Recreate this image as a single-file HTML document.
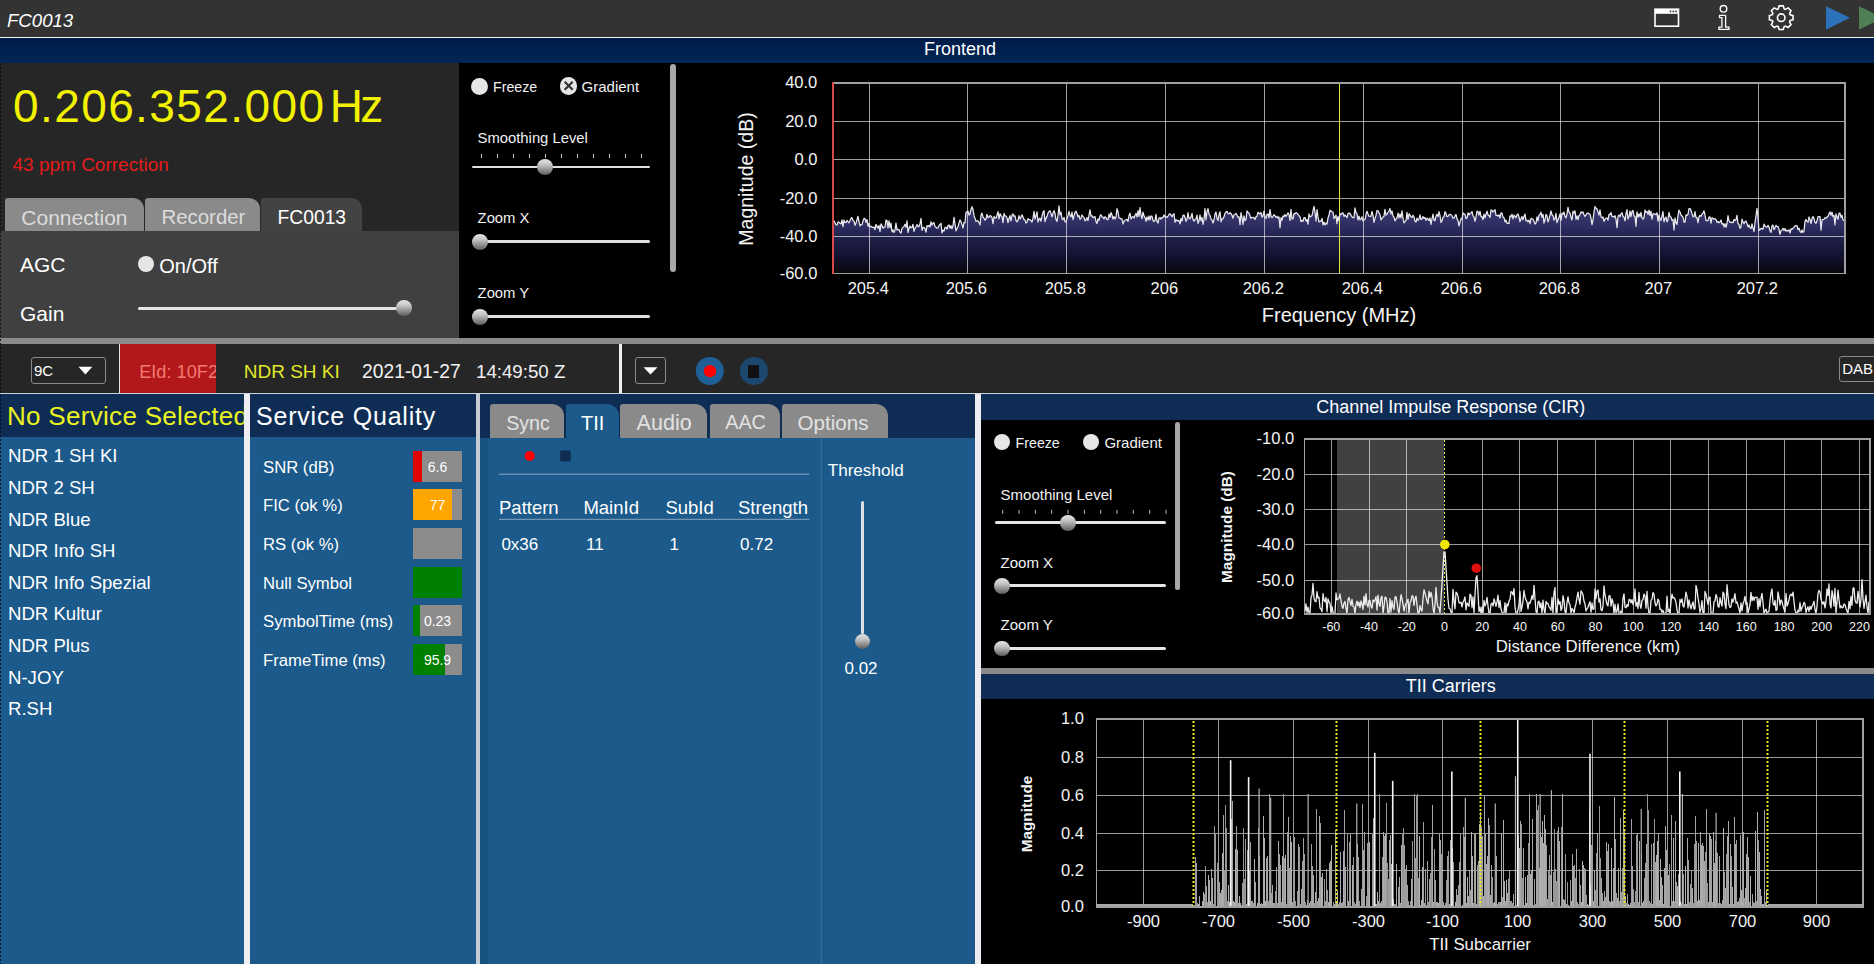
<!DOCTYPE html><html><head><meta charset="utf-8"><style>
*{margin:0;padding:0;box-sizing:border-box}
html,body{width:1874px;height:964px;overflow:hidden;background:#000;font-family:"Liberation Sans",sans-serif}
.a{position:absolute}
.t{position:absolute;white-space:nowrap;font-family:"Liberation Sans",sans-serif}
.thumb{position:absolute;border-radius:50%;background:linear-gradient(180deg,#e4e4e4 0%,#c4c4c4 35%,#8c8c8c 70%,#5c5c5c 100%)}
.radio{position:absolute;border-radius:50%;background:#e6e6e6}
svg{position:absolute;left:0;top:0}
</style></head><body><div class="a" style="left:0px;top:0px;width:1874px;height:37px;background:#333333;"></div>
<div class="t " style="left:7.0px;top:11.5px;font-size:18.6px;line-height:18.6px;color:#fff;font-style:italic">FC0013</div>
<svg width="1874" height="36" style="left:0;top:0">
<rect x="1655" y="9.2" width="23.5" height="17" fill="none" stroke="#fff" stroke-width="1.6"/>
<rect x="1655" y="9.2" width="23.5" height="4.6" fill="#fff"/>
<circle cx="1670.5" cy="11.4" r="0.9" fill="#333"/><circle cx="1673.3" cy="11.4" r="0.9" fill="#333"/><circle cx="1676" cy="11.4" r="0.9" fill="#333"/>
<circle cx="1723.5" cy="8.8" r="3.3" fill="none" stroke="#fff" stroke-width="1.4"/>
<path d="M1719.5 15.3 H1725.6 V27.1 H1729 V29.4 H1718.9 V27.1 H1721.9 V17.6 H1719.5 Z" fill="none" stroke="#fff" stroke-width="1.3" stroke-linejoin="round"/>
<path id="gear" d="M1790.00 14.69 L1793.03 15.67 L1793.03 19.73 L1790.00 20.71 L1789.55 21.79 L1791.00 24.63 L1788.13 27.50 L1785.29 26.05 L1784.21 26.50 L1783.23 29.53 L1779.17 29.53 L1778.19 26.50 L1777.11 26.05 L1774.27 27.50 L1771.40 24.63 L1772.85 21.79 L1772.40 20.71 L1769.37 19.73 L1769.37 15.67 L1772.40 14.69 L1772.85 13.61 L1771.40 10.77 L1774.27 7.90 L1777.11 9.35 L1778.19 8.90 L1779.17 5.87 L1783.23 5.87 L1784.21 8.90 L1785.29 9.35 L1788.13 7.90 L1791.00 10.77 L1789.55 13.61 Z" fill="none" stroke="#fff" stroke-width="1.6"/>
<circle cx="1781.2" cy="17.7" r="3.8" fill="none" stroke="#fff" stroke-width="1.6"/>
<path d="M1826 6.3 L1850 17.7 L1826 29.8 Z" fill="#2b72bb"/>
<path d="M1859 6.3 L1883 17.7 L1859 29.8 Z" fill="#4f7f55"/>
</svg>
<div class="a" style="left:0px;top:37.5px;width:1874px;height:25.5px;background:linear-gradient(180deg,#001c48 0%,#00214f 50%,#002656 100%);"></div>
<div class="a" style="left:0px;top:36.8px;width:1874px;height:1.4px;background:#f4f4f4;"></div>
<div class="t " style="left:460.0px;width:1000px;text-align:center;top:40.4px;font-size:18px;line-height:18px;color:#fff;">Frontend</div>
<div class="a" style="left:0px;top:63px;width:459px;height:168px;background:#262626;"></div>
<div class="t " style="left:13.0px;top:83.3px;font-size:46px;line-height:46px;color:#f2f200;letter-spacing:1.4px">0.206.352.000</div>
<div class="t " style="left:329.7px;top:83.3px;font-size:46px;line-height:46px;color:#f2f200;letter-spacing:-2.6px">Hz</div>
<div class="t " style="left:12.5px;top:154.9px;font-size:19px;line-height:19px;color:#e31c1c;">43 ppm Correction</div>
<div class="a" style="left:0px;top:231px;width:459px;height:107px;background:#404040;"></div>
<div class="a" style="left:5px;top:197.5px;width:139px;height:33.5px;background:#8a8a8a;border-radius:3px 11px 0 0"></div>
<div class="t " style="left:21.3px;top:206.5px;font-size:21px;line-height:21px;color:#dcdcdc;">Connection</div>
<div class="a" style="left:145px;top:197.5px;width:114.60000000000002px;height:33.5px;background:#8a8a8a;border-radius:3px 11px 0 0"></div>
<div class="t " style="left:161.5px;top:207.0px;font-size:20.4px;line-height:20.4px;color:#dcdcdc;">Recorder</div>
<div class="a" style="left:260.8px;top:197.5px;width:101.59999999999997px;height:33.5px;background:#434343;border-radius:3px 11px 0 0"></div>
<div class="t " style="left:277.5px;top:208.0px;font-size:19.3px;line-height:19.3px;color:#ffffff;">FC0013</div>
<div class="t " style="left:20.0px;top:253.6px;font-size:21px;line-height:21px;color:#fff;">AGC</div>
<div class="radio" style="left:138px;top:255.5px;width:16px;height:16px"></div>
<div class="t " style="left:159.3px;top:255.8px;font-size:20px;line-height:20px;color:#fff;">On/Off</div>
<div class="t " style="left:20.0px;top:302.5px;font-size:21px;line-height:21px;color:#fff;">Gain</div>
<div class="a" style="left:138px;top:306.5px;width:262px;height:3px;background:#e6e6e6;border-radius:1.5px"></div>
<div class="thumb" style="left:395.90000000000003px;top:300.1px;width:15.8px;height:15.8px"></div>
<div class="a" style="left:459px;top:63px;width:1415px;height:275px;background:#000;"></div>
<div class="radio" style="left:470.9px;top:77.7px;width:17.0px;height:17.0px"></div>
<div class="t " style="left:493.0px;top:80.0px;font-size:14.2px;line-height:14.2px;color:#f2f2f2;">Freeze</div>
<div class="radio" style="left:559.8px;top:77.39999999999999px;width:17.4px;height:17.4px"></div>
<svg class="a" style="left:559.8px;top:77.39999999999999px" width="17.4" height="17.4"><path d="M4.699999999999999 4.699999999999999L12.7 12.7M12.7 4.699999999999999L4.699999999999999 12.7" stroke="#333" stroke-width="2.2"/></svg>
<div class="t " style="left:581.6px;top:79.3px;font-size:15px;line-height:15px;color:#f2f2f2;">Gradient</div>
<div class="t " style="left:477.6px;top:130.9px;font-size:14.8px;line-height:14.8px;color:#f2f2f2;">Smoothing Level</div>
<svg width="1874" height="340"><rect x="481" y="154" width="1" height="4" fill="#c8c8c8"/><rect x="497" y="154" width="1" height="4" fill="#c8c8c8"/><rect x="513" y="154" width="1" height="4" fill="#c8c8c8"/><rect x="529" y="154" width="1" height="4" fill="#c8c8c8"/><rect x="545" y="154" width="1" height="4" fill="#c8c8c8"/><rect x="561" y="154" width="1" height="4" fill="#c8c8c8"/><rect x="577" y="154" width="1" height="4" fill="#c8c8c8"/><rect x="593" y="154" width="1" height="4" fill="#c8c8c8"/><rect x="609" y="154" width="1" height="4" fill="#c8c8c8"/><rect x="625" y="154" width="1" height="4" fill="#c8c8c8"/><rect x="641" y="154" width="1" height="4" fill="#c8c8c8"/></svg>
<div class="a" style="left:472px;top:165.5px;width:178px;height:2.5px;background:#e0e0e0;border-radius:1.5px"></div>
<div class="thumb" style="left:537.4px;top:159.39999999999998px;width:15.8px;height:15.8px"></div>
<div class="t " style="left:477.6px;top:210.7px;font-size:14.8px;line-height:14.8px;color:#f2f2f2;">Zoom X</div>
<div class="a" style="left:472px;top:240.3px;width:178px;height:2.5px;background:#e0e0e0;border-radius:1.5px"></div>
<div class="thumb" style="left:472.1px;top:234.29999999999998px;width:15.8px;height:15.8px"></div>
<div class="t " style="left:477.6px;top:285.7px;font-size:14.8px;line-height:14.8px;color:#f2f2f2;">Zoom Y</div>
<div class="a" style="left:472px;top:315px;width:178px;height:2.5px;background:#e0e0e0;border-radius:1.5px"></div>
<div class="thumb" style="left:472.1px;top:309.0px;width:15.8px;height:15.8px"></div>
<div class="a" style="left:670px;top:64px;width:6px;height:208px;background:#a8a8a8;border-radius:3px"></div>
<svg width="1874" height="340">
<defs><linearGradient id="sg" x1="0" y1="205" x2="0" y2="273.5" gradientUnits="userSpaceOnUse">
<stop offset="0" stop-color="#3c3c74"/><stop offset="0.3" stop-color="#2e2e62"/><stop offset="0.5" stop-color="#1f1f48"/><stop offset="0.75" stop-color="#121230"/><stop offset="1" stop-color="#06060c"/></linearGradient></defs>
<polygon points="833,273.5 834,220.7 835,222.7 836,224.8 837,225.0 838,221.9 839,222.3 840,223.4 841,223.8 842,219.9 843,226.7 844,220.1 845,222.5 846,222.7 847,220.3 848,221.6 849,222.8 850,220.7 851,218.3 852,217.6 853,220.5 854,221.2 855,225.3 856,222.9 857,219.7 858,216.3 859,221.6 860,225.9 861,224.6 862,224.7 863,221.1 864,218.4 865,218.5 866,222.3 867,219.6 868,226.2 869,223.4 870,227.0 871,226.2 872,227.1 873,227.5 874,227.0 875,229.7 876,224.3 877,226.7 878,228.2 879,225.4 880,231.7 881,223.8 882,225.5 883,228.2 884,227.3 885,227.1 886,220.0 887,220.6 888,228.0 889,220.8 890,227.7 891,223.2 892,231.8 893,229.9 894,232.5 895,230.2 896,223.1 897,230.0 898,229.4 899,229.7 900,232.1 901,233.1 902,228.2 903,227.4 904,226.4 905,224.3 906,227.3 907,220.9 908,232.5 909,228.4 910,226.1 911,227.7 912,227.5 913,224.3 914,231.4 915,228.1 916,227.1 917,224.6 918,226.4 919,226.6 920,223.9 921,218.3 922,230.3 923,227.6 924,227.3 925,228.8 926,232.2 927,225.7 928,226.5 929,225.3 930,227.0 931,221.8 932,225.0 933,223.2 934,222.6 935,226.6 936,227.3 937,228.2 938,227.9 939,225.5 940,224.5 941,223.3 942,233.0 943,230.1 944,231.1 945,227.3 946,227.4 947,229.1 948,225.7 949,224.9 950,228.2 951,225.7 952,228.7 953,225.7 954,217.4 955,224.0 956,230.8 957,228.5 958,226.8 959,222.9 960,219.9 961,221.7 962,224.4 963,228.0 964,222.5 965,222.8 966,212.1 967,212.2 968,211.0 969,215.1 970,214.0 971,209.5 972,206.7 973,209.5 974,215.7 975,218.4 976,221.3 977,220.7 978,221.1 979,222.5 980,225.0 981,215.1 982,213.1 983,217.0 984,218.4 985,220.1 986,219.0 987,214.3 988,217.6 989,217.2 990,215.7 991,216.1 992,217.7 993,223.7 994,216.4 995,218.0 996,218.2 997,215.1 998,211.7 999,218.8 1000,213.6 1001,215.7 1002,216.5 1003,222.6 1004,213.4 1005,215.9 1006,216.0 1007,217.9 1008,222.5 1009,218.5 1010,215.7 1011,220.9 1012,215.4 1013,213.8 1014,216.4 1015,215.9 1016,220.6 1017,221.8 1018,220.4 1019,215.7 1020,218.9 1021,217.3 1022,214.8 1023,217.1 1024,219.6 1025,220.0 1026,223.0 1027,222.4 1028,218.7 1029,219.7 1030,219.7 1031,220.7 1032,222.1 1033,218.4 1034,211.4 1035,219.0 1036,215.6 1037,211.8 1038,222.0 1039,219.2 1040,218.1 1041,221.2 1042,216.0 1043,212.3 1044,210.6 1045,221.6 1046,218.2 1047,216.6 1048,213.1 1049,211.5 1050,210.7 1051,213.4 1052,216.9 1053,213.2 1054,210.6 1055,213.5 1056,219.6 1057,221.4 1058,215.5 1059,205.8 1060,214.8 1061,212.2 1062,219.0 1063,219.6 1064,217.4 1065,221.7 1066,222.3 1067,218.6 1068,215.4 1069,211.3 1070,215.7 1071,216.9 1072,212.1 1073,219.7 1074,215.8 1075,212.1 1076,211.2 1077,213.8 1078,216.8 1079,215.4 1080,219.3 1081,218.1 1082,215.0 1083,216.6 1084,217.5 1085,220.8 1086,220.0 1087,217.6 1088,220.5 1089,215.3 1090,209.8 1091,216.0 1092,215.7 1093,217.7 1094,217.1 1095,216.6 1096,221.6 1097,223.5 1098,218.9 1099,220.4 1100,215.8 1101,214.7 1102,217.0 1103,217.1 1104,218.9 1105,216.7 1106,217.6 1107,219.7 1108,219.6 1109,214.0 1110,217.5 1111,212.5 1112,214.8 1113,219.0 1114,216.6 1115,219.0 1116,217.0 1117,208.6 1118,211.7 1119,218.0 1120,218.2 1121,219.0 1122,218.9 1123,224.0 1124,221.1 1125,220.1 1126,220.0 1127,219.3 1128,221.5 1129,215.5 1130,213.2 1131,218.9 1132,217.2 1133,216.5 1134,217.9 1135,215.5 1136,213.4 1137,217.0 1138,210.6 1139,216.4 1140,207.5 1141,215.4 1142,218.7 1143,212.2 1144,215.9 1145,217.3 1146,221.4 1147,217.0 1148,220.0 1149,216.0 1150,220.0 1151,216.0 1152,216.2 1153,220.6 1154,221.7 1155,220.4 1156,214.4 1157,221.6 1158,223.0 1159,218.3 1160,217.5 1161,219.2 1162,217.5 1163,217.5 1164,214.9 1165,216.9 1166,216.8 1167,217.4 1168,216.1 1169,214.5 1170,213.6 1171,215.1 1172,216.8 1173,214.7 1174,213.6 1175,222.3 1176,219.6 1177,221.0 1178,220.3 1179,220.6 1180,223.9 1181,218.4 1182,221.0 1183,215.3 1184,215.0 1185,217.5 1186,221.3 1187,219.5 1188,212.6 1189,218.3 1190,218.8 1191,217.1 1192,213.3 1193,219.4 1194,221.1 1195,219.6 1196,218.9 1197,215.2 1198,223.3 1199,221.0 1200,214.9 1201,220.7 1202,217.4 1203,224.4 1204,219.5 1205,208.5 1206,219.6 1207,211.6 1208,208.7 1209,214.2 1210,215.4 1211,219.2 1212,219.9 1213,223.0 1214,220.0 1215,214.0 1216,212.0 1217,218.5 1218,220.6 1219,214.7 1220,211.8 1221,221.9 1222,218.8 1223,218.8 1224,216.7 1225,213.4 1226,211.9 1227,211.3 1228,213.4 1229,213.8 1230,212.6 1231,213.6 1232,215.2 1233,218.2 1234,214.9 1235,214.5 1236,213.4 1237,215.0 1238,217.2 1239,216.7 1240,224.7 1241,212.6 1242,217.7 1243,224.5 1244,215.9 1245,220.6 1246,219.6 1247,210.8 1248,212.4 1249,213.2 1250,215.7 1251,218.3 1252,217.5 1253,217.4 1254,217.9 1255,219.5 1256,216.8 1257,216.3 1258,212.3 1259,213.3 1260,214.0 1261,212.5 1262,217.2 1263,216.1 1264,211.1 1265,217.1 1266,218.3 1267,214.4 1268,214.0 1269,217.9 1270,209.7 1271,216.4 1272,217.6 1273,216.3 1274,214.7 1275,215.7 1276,217.4 1277,216.3 1278,218.3 1279,216.9 1280,227.7 1281,217.6 1282,220.4 1283,215.9 1284,216.7 1285,214.5 1286,216.5 1287,214.8 1288,212.8 1289,214.5 1290,220.4 1291,209.3 1292,218.8 1293,218.9 1294,213.6 1295,213.9 1296,212.6 1297,213.2 1298,214.4 1299,215.8 1300,216.7 1301,221.6 1302,220.3 1303,221.3 1304,217.5 1305,217.5 1306,221.1 1307,219.6 1308,224.1 1309,213.9 1310,216.9 1311,216.2 1312,215.7 1313,210.7 1314,206.4 1315,212.3 1316,221.0 1317,209.7 1318,216.9 1319,222.0 1320,221.2 1321,221.4 1322,218.4 1323,224.8 1324,222.2 1325,225.0 1326,222.9 1327,224.0 1328,218.0 1329,215.0 1330,210.4 1331,210.8 1332,211.9 1333,212.2 1334,218.5 1335,217.2 1336,215.1 1337,223.6 1338,216.4 1339,220.7 1340,213.9 1341,214.5 1342,213.2 1343,212.9 1344,216.3 1345,215.0 1346,216.3 1347,217.5 1348,213.5 1349,213.1 1350,213.4 1351,215.4 1352,216.8 1353,217.7 1354,217.7 1355,207.8 1356,212.8 1357,213.8 1358,219.8 1359,216.1 1360,219.9 1361,219.0 1362,216.7 1363,221.1 1364,219.8 1365,219.5 1366,214.4 1367,211.3 1368,213.9 1369,216.2 1370,216.3 1371,216.1 1372,211.5 1373,215.3 1374,222.4 1375,218.4 1376,215.4 1377,210.5 1378,210.8 1379,212.9 1380,214.5 1381,219.9 1382,218.4 1383,217.0 1384,216.4 1385,209.3 1386,215.2 1387,214.1 1388,212.3 1389,211.2 1390,208.5 1391,214.0 1392,210.9 1393,215.8 1394,217.2 1395,220.9 1396,218.9 1397,218.1 1398,213.1 1399,217.8 1400,214.0 1401,217.9 1402,210.8 1403,218.1 1404,222.8 1405,221.7 1406,220.5 1407,212.3 1408,219.5 1409,213.9 1410,215.0 1411,217.2 1412,217.5 1413,215.2 1414,216.9 1415,221.3 1416,222.1 1417,218.2 1418,220.3 1419,218.8 1420,214.9 1421,219.6 1422,218.7 1423,216.5 1424,218.5 1425,217.4 1426,220.4 1427,218.4 1428,218.7 1429,220.7 1430,217.9 1431,224.3 1432,218.9 1433,214.2 1434,220.1 1435,220.7 1436,216.4 1437,214.4 1438,216.6 1439,211.7 1440,215.6 1441,222.5 1442,220.8 1443,217.0 1444,216.9 1445,211.6 1446,213.5 1447,216.7 1448,216.5 1449,214.7 1450,214.3 1451,214.8 1452,215.9 1453,218.2 1454,218.2 1455,215.8 1456,214.5 1457,218.8 1458,220.6 1459,225.9 1460,222.1 1461,218.7 1462,218.8 1463,212.9 1464,213.9 1465,214.3 1466,218.5 1467,218.0 1468,212.9 1469,214.9 1470,213.3 1471,213.2 1472,211.5 1473,215.9 1474,216.9 1475,221.4 1476,216.9 1477,211.1 1478,211.6 1479,215.0 1480,211.3 1481,216.7 1482,216.6 1483,219.7 1484,214.1 1485,217.9 1486,214.2 1487,211.2 1488,214.9 1489,215.7 1490,217.5 1491,210.0 1492,210.2 1493,212.0 1494,210.9 1495,209.6 1496,215.4 1497,215.3 1498,216.1 1499,214.8 1500,218.0 1501,212.9 1502,213.1 1503,217.2 1504,217.6 1505,221.9 1506,220.0 1507,223.4 1508,223.2 1509,223.3 1510,215.8 1511,216.9 1512,214.1 1513,218.8 1514,215.1 1515,216.4 1516,217.9 1517,214.7 1518,214.0 1519,217.0 1520,221.5 1521,218.8 1522,216.5 1523,219.7 1524,216.4 1525,214.1 1526,220.7 1527,220.4 1528,221.8 1529,220.2 1530,223.7 1531,218.4 1532,218.7 1533,219.2 1534,221.5 1535,224.0 1536,223.1 1537,216.9 1538,220.8 1539,215.2 1540,214.6 1541,212.2 1542,217.4 1543,214.3 1544,223.1 1545,219.8 1546,214.4 1547,215.8 1548,221.9 1549,219.2 1550,214.8 1551,210.8 1552,215.1 1553,215.6 1554,220.1 1555,218.9 1556,213.5 1557,222.6 1558,219.9 1559,217.5 1560,213.8 1561,220.4 1562,213.2 1563,214.2 1564,212.1 1565,216.3 1566,217.8 1567,214.4 1568,207.4 1569,212.1 1570,213.2 1571,217.3 1572,220.0 1573,211.2 1574,213.2 1575,210.8 1576,219.3 1577,215.8 1578,219.7 1579,215.7 1580,214.8 1581,211.9 1582,212.8 1583,212.0 1584,214.8 1585,216.5 1586,214.9 1587,213.4 1588,213.0 1589,214.0 1590,214.1 1591,218.3 1592,224.6 1593,219.8 1594,212.0 1595,206.5 1596,208.3 1597,208.9 1598,211.9 1599,215.2 1600,209.8 1601,216.8 1602,217.9 1603,216.9 1604,221.4 1605,219.2 1606,218.1 1607,218.1 1608,220.2 1609,214.3 1610,214.7 1611,212.5 1612,216.3 1613,216.7 1614,217.1 1615,215.7 1616,219.1 1617,227.7 1618,216.5 1619,215.0 1620,216.7 1621,213.9 1622,212.7 1623,216.3 1624,217.2 1625,220.9 1626,213.3 1627,209.7 1628,219.0 1629,216.8 1630,211.0 1631,216.7 1632,211.5 1633,210.4 1634,216.1 1635,216.4 1636,226.1 1637,211.9 1638,217.0 1639,213.8 1640,216.9 1641,212.4 1642,217.9 1643,219.1 1644,217.7 1645,210.1 1646,212.1 1647,211.5 1648,214.3 1649,210.2 1650,215.5 1651,211.2 1652,219.1 1653,213.9 1654,213.7 1655,214.2 1656,214.6 1657,212.9 1658,221.2 1659,214.8 1660,219.1 1661,220.3 1662,215.9 1663,211.5 1664,221.7 1665,218.5 1666,217.0 1667,221.9 1668,219.5 1669,212.4 1670,216.6 1671,217.0 1672,220.4 1673,219.4 1674,230.0 1675,217.8 1676,222.6 1677,224.4 1678,215.3 1679,210.2 1680,212.0 1681,215.0 1682,216.0 1683,217.1 1684,222.1 1685,222.2 1686,214.9 1687,215.3 1688,214.5 1689,208.5 1690,208.7 1691,210.2 1692,213.6 1693,216.7 1694,216.7 1695,211.7 1696,217.6 1697,217.7 1698,222.6 1699,216.8 1700,215.4 1701,216.4 1702,214.2 1703,213.1 1704,210.8 1705,215.0 1706,220.7 1707,220.5 1708,220.5 1709,217.2 1710,216.8 1711,223.1 1712,217.7 1713,218.2 1714,219.3 1715,218.7 1716,219.5 1717,222.4 1718,221.4 1719,222.8 1720,222.1 1721,220.0 1722,224.2 1723,223.4 1724,226.8 1725,223.6 1726,227.3 1727,223.5 1728,215.7 1729,220.9 1730,222.0 1731,222.7 1732,222.1 1733,222.7 1734,219.5 1735,220.5 1736,219.6 1737,215.4 1738,223.4 1739,224.5 1740,228.3 1741,226.8 1742,219.1 1743,221.7 1744,223.8 1745,221.5 1746,221.0 1747,223.4 1748,226.9 1749,225.0 1750,227.6 1751,228.6 1752,223.9 1753,228.1 1754,231.5 1755,222.7 1756,215.9 1757,208.4 1758,217.0 1759,230.4 1760,229.6 1761,228.3 1762,228.6 1763,229.1 1764,224.1 1765,225.9 1766,227.1 1767,227.0 1768,225.4 1769,227.1 1770,230.5 1771,232.4 1772,225.8 1773,225.1 1774,229.7 1775,227.9 1776,225.3 1777,226.6 1778,226.5 1779,229.5 1780,234.3 1781,230.5 1782,230.0 1783,228.3 1784,230.5 1785,228.5 1786,231.2 1787,230.2 1788,230.9 1789,229.8 1790,233.0 1791,228.9 1792,229.3 1793,228.3 1794,227.4 1795,225.8 1796,225.7 1797,225.6 1798,229.6 1799,228.2 1800,231.3 1801,232.5 1802,229.9 1803,232.5 1804,231.4 1805,221.4 1806,219.6 1807,221.4 1808,222.3 1809,217.0 1810,219.5 1811,223.7 1812,218.6 1813,216.6 1814,218.6 1815,222.3 1816,223.3 1817,221.1 1818,216.7 1819,216.7 1820,216.5 1821,230.2 1822,219.7 1823,219.7 1824,219.2 1825,217.7 1826,218.3 1827,216.9 1828,216.2 1829,214.0 1830,211.9 1831,215.2 1832,212.1 1833,216.7 1834,215.4 1835,224.8 1836,213.9 1837,216.8 1838,219.3 1839,213.2 1840,213.2 1841,217.4 1842,215.3 1843,219.8 1844,220.7 1845,273.5" fill="url(#sg)"/>
<g shape-rendering="crispEdges"><rect x="833" y="121" width="1012" height="1" fill="rgba(255,255,255,0.62)"/><rect x="833" y="159" width="1012" height="1" fill="rgba(255,255,255,0.62)"/><rect x="833" y="198" width="1012" height="1" fill="rgba(255,255,255,0.62)"/><rect x="833" y="236" width="1012" height="1" fill="rgba(255,255,255,0.62)"/><rect x="869" y="84" width="1" height="189" fill="rgba(255,255,255,0.62)"/><rect x="967" y="84" width="1" height="189" fill="rgba(255,255,255,0.62)"/><rect x="1066" y="84" width="1" height="189" fill="rgba(255,255,255,0.62)"/><rect x="1165" y="84" width="1" height="189" fill="rgba(255,255,255,0.62)"/><rect x="1264" y="84" width="1" height="189" fill="rgba(255,255,255,0.62)"/><rect x="1363" y="84" width="1" height="189" fill="rgba(255,255,255,0.62)"/><rect x="1462" y="84" width="1" height="189" fill="rgba(255,255,255,0.62)"/><rect x="1560" y="84" width="1" height="189" fill="rgba(255,255,255,0.62)"/><rect x="1659" y="84" width="1" height="189" fill="rgba(255,255,255,0.62)"/><rect x="1758" y="84" width="1" height="189" fill="rgba(255,255,255,0.62)"/>
<rect x="1339" y="84" width="1" height="189" fill="#e6e63a"/></g>
<polyline points="834,220.7 835,222.7 836,224.8 837,225.0 838,221.9 839,222.3 840,223.4 841,223.8 842,219.9 843,226.7 844,220.1 845,222.5 846,222.7 847,220.3 848,221.6 849,222.8 850,220.7 851,218.3 852,217.6 853,220.5 854,221.2 855,225.3 856,222.9 857,219.7 858,216.3 859,221.6 860,225.9 861,224.6 862,224.7 863,221.1 864,218.4 865,218.5 866,222.3 867,219.6 868,226.2 869,223.4 870,227.0 871,226.2 872,227.1 873,227.5 874,227.0 875,229.7 876,224.3 877,226.7 878,228.2 879,225.4 880,231.7 881,223.8 882,225.5 883,228.2 884,227.3 885,227.1 886,220.0 887,220.6 888,228.0 889,220.8 890,227.7 891,223.2 892,231.8 893,229.9 894,232.5 895,230.2 896,223.1 897,230.0 898,229.4 899,229.7 900,232.1 901,233.1 902,228.2 903,227.4 904,226.4 905,224.3 906,227.3 907,220.9 908,232.5 909,228.4 910,226.1 911,227.7 912,227.5 913,224.3 914,231.4 915,228.1 916,227.1 917,224.6 918,226.4 919,226.6 920,223.9 921,218.3 922,230.3 923,227.6 924,227.3 925,228.8 926,232.2 927,225.7 928,226.5 929,225.3 930,227.0 931,221.8 932,225.0 933,223.2 934,222.6 935,226.6 936,227.3 937,228.2 938,227.9 939,225.5 940,224.5 941,223.3 942,233.0 943,230.1 944,231.1 945,227.3 946,227.4 947,229.1 948,225.7 949,224.9 950,228.2 951,225.7 952,228.7 953,225.7 954,217.4 955,224.0 956,230.8 957,228.5 958,226.8 959,222.9 960,219.9 961,221.7 962,224.4 963,228.0 964,222.5 965,222.8 966,212.1 967,212.2 968,211.0 969,215.1 970,214.0 971,209.5 972,206.7 973,209.5 974,215.7 975,218.4 976,221.3 977,220.7 978,221.1 979,222.5 980,225.0 981,215.1 982,213.1 983,217.0 984,218.4 985,220.1 986,219.0 987,214.3 988,217.6 989,217.2 990,215.7 991,216.1 992,217.7 993,223.7 994,216.4 995,218.0 996,218.2 997,215.1 998,211.7 999,218.8 1000,213.6 1001,215.7 1002,216.5 1003,222.6 1004,213.4 1005,215.9 1006,216.0 1007,217.9 1008,222.5 1009,218.5 1010,215.7 1011,220.9 1012,215.4 1013,213.8 1014,216.4 1015,215.9 1016,220.6 1017,221.8 1018,220.4 1019,215.7 1020,218.9 1021,217.3 1022,214.8 1023,217.1 1024,219.6 1025,220.0 1026,223.0 1027,222.4 1028,218.7 1029,219.7 1030,219.7 1031,220.7 1032,222.1 1033,218.4 1034,211.4 1035,219.0 1036,215.6 1037,211.8 1038,222.0 1039,219.2 1040,218.1 1041,221.2 1042,216.0 1043,212.3 1044,210.6 1045,221.6 1046,218.2 1047,216.6 1048,213.1 1049,211.5 1050,210.7 1051,213.4 1052,216.9 1053,213.2 1054,210.6 1055,213.5 1056,219.6 1057,221.4 1058,215.5 1059,205.8 1060,214.8 1061,212.2 1062,219.0 1063,219.6 1064,217.4 1065,221.7 1066,222.3 1067,218.6 1068,215.4 1069,211.3 1070,215.7 1071,216.9 1072,212.1 1073,219.7 1074,215.8 1075,212.1 1076,211.2 1077,213.8 1078,216.8 1079,215.4 1080,219.3 1081,218.1 1082,215.0 1083,216.6 1084,217.5 1085,220.8 1086,220.0 1087,217.6 1088,220.5 1089,215.3 1090,209.8 1091,216.0 1092,215.7 1093,217.7 1094,217.1 1095,216.6 1096,221.6 1097,223.5 1098,218.9 1099,220.4 1100,215.8 1101,214.7 1102,217.0 1103,217.1 1104,218.9 1105,216.7 1106,217.6 1107,219.7 1108,219.6 1109,214.0 1110,217.5 1111,212.5 1112,214.8 1113,219.0 1114,216.6 1115,219.0 1116,217.0 1117,208.6 1118,211.7 1119,218.0 1120,218.2 1121,219.0 1122,218.9 1123,224.0 1124,221.1 1125,220.1 1126,220.0 1127,219.3 1128,221.5 1129,215.5 1130,213.2 1131,218.9 1132,217.2 1133,216.5 1134,217.9 1135,215.5 1136,213.4 1137,217.0 1138,210.6 1139,216.4 1140,207.5 1141,215.4 1142,218.7 1143,212.2 1144,215.9 1145,217.3 1146,221.4 1147,217.0 1148,220.0 1149,216.0 1150,220.0 1151,216.0 1152,216.2 1153,220.6 1154,221.7 1155,220.4 1156,214.4 1157,221.6 1158,223.0 1159,218.3 1160,217.5 1161,219.2 1162,217.5 1163,217.5 1164,214.9 1165,216.9 1166,216.8 1167,217.4 1168,216.1 1169,214.5 1170,213.6 1171,215.1 1172,216.8 1173,214.7 1174,213.6 1175,222.3 1176,219.6 1177,221.0 1178,220.3 1179,220.6 1180,223.9 1181,218.4 1182,221.0 1183,215.3 1184,215.0 1185,217.5 1186,221.3 1187,219.5 1188,212.6 1189,218.3 1190,218.8 1191,217.1 1192,213.3 1193,219.4 1194,221.1 1195,219.6 1196,218.9 1197,215.2 1198,223.3 1199,221.0 1200,214.9 1201,220.7 1202,217.4 1203,224.4 1204,219.5 1205,208.5 1206,219.6 1207,211.6 1208,208.7 1209,214.2 1210,215.4 1211,219.2 1212,219.9 1213,223.0 1214,220.0 1215,214.0 1216,212.0 1217,218.5 1218,220.6 1219,214.7 1220,211.8 1221,221.9 1222,218.8 1223,218.8 1224,216.7 1225,213.4 1226,211.9 1227,211.3 1228,213.4 1229,213.8 1230,212.6 1231,213.6 1232,215.2 1233,218.2 1234,214.9 1235,214.5 1236,213.4 1237,215.0 1238,217.2 1239,216.7 1240,224.7 1241,212.6 1242,217.7 1243,224.5 1244,215.9 1245,220.6 1246,219.6 1247,210.8 1248,212.4 1249,213.2 1250,215.7 1251,218.3 1252,217.5 1253,217.4 1254,217.9 1255,219.5 1256,216.8 1257,216.3 1258,212.3 1259,213.3 1260,214.0 1261,212.5 1262,217.2 1263,216.1 1264,211.1 1265,217.1 1266,218.3 1267,214.4 1268,214.0 1269,217.9 1270,209.7 1271,216.4 1272,217.6 1273,216.3 1274,214.7 1275,215.7 1276,217.4 1277,216.3 1278,218.3 1279,216.9 1280,227.7 1281,217.6 1282,220.4 1283,215.9 1284,216.7 1285,214.5 1286,216.5 1287,214.8 1288,212.8 1289,214.5 1290,220.4 1291,209.3 1292,218.8 1293,218.9 1294,213.6 1295,213.9 1296,212.6 1297,213.2 1298,214.4 1299,215.8 1300,216.7 1301,221.6 1302,220.3 1303,221.3 1304,217.5 1305,217.5 1306,221.1 1307,219.6 1308,224.1 1309,213.9 1310,216.9 1311,216.2 1312,215.7 1313,210.7 1314,206.4 1315,212.3 1316,221.0 1317,209.7 1318,216.9 1319,222.0 1320,221.2 1321,221.4 1322,218.4 1323,224.8 1324,222.2 1325,225.0 1326,222.9 1327,224.0 1328,218.0 1329,215.0 1330,210.4 1331,210.8 1332,211.9 1333,212.2 1334,218.5 1335,217.2 1336,215.1 1337,223.6 1338,216.4 1339,220.7 1340,213.9 1341,214.5 1342,213.2 1343,212.9 1344,216.3 1345,215.0 1346,216.3 1347,217.5 1348,213.5 1349,213.1 1350,213.4 1351,215.4 1352,216.8 1353,217.7 1354,217.7 1355,207.8 1356,212.8 1357,213.8 1358,219.8 1359,216.1 1360,219.9 1361,219.0 1362,216.7 1363,221.1 1364,219.8 1365,219.5 1366,214.4 1367,211.3 1368,213.9 1369,216.2 1370,216.3 1371,216.1 1372,211.5 1373,215.3 1374,222.4 1375,218.4 1376,215.4 1377,210.5 1378,210.8 1379,212.9 1380,214.5 1381,219.9 1382,218.4 1383,217.0 1384,216.4 1385,209.3 1386,215.2 1387,214.1 1388,212.3 1389,211.2 1390,208.5 1391,214.0 1392,210.9 1393,215.8 1394,217.2 1395,220.9 1396,218.9 1397,218.1 1398,213.1 1399,217.8 1400,214.0 1401,217.9 1402,210.8 1403,218.1 1404,222.8 1405,221.7 1406,220.5 1407,212.3 1408,219.5 1409,213.9 1410,215.0 1411,217.2 1412,217.5 1413,215.2 1414,216.9 1415,221.3 1416,222.1 1417,218.2 1418,220.3 1419,218.8 1420,214.9 1421,219.6 1422,218.7 1423,216.5 1424,218.5 1425,217.4 1426,220.4 1427,218.4 1428,218.7 1429,220.7 1430,217.9 1431,224.3 1432,218.9 1433,214.2 1434,220.1 1435,220.7 1436,216.4 1437,214.4 1438,216.6 1439,211.7 1440,215.6 1441,222.5 1442,220.8 1443,217.0 1444,216.9 1445,211.6 1446,213.5 1447,216.7 1448,216.5 1449,214.7 1450,214.3 1451,214.8 1452,215.9 1453,218.2 1454,218.2 1455,215.8 1456,214.5 1457,218.8 1458,220.6 1459,225.9 1460,222.1 1461,218.7 1462,218.8 1463,212.9 1464,213.9 1465,214.3 1466,218.5 1467,218.0 1468,212.9 1469,214.9 1470,213.3 1471,213.2 1472,211.5 1473,215.9 1474,216.9 1475,221.4 1476,216.9 1477,211.1 1478,211.6 1479,215.0 1480,211.3 1481,216.7 1482,216.6 1483,219.7 1484,214.1 1485,217.9 1486,214.2 1487,211.2 1488,214.9 1489,215.7 1490,217.5 1491,210.0 1492,210.2 1493,212.0 1494,210.9 1495,209.6 1496,215.4 1497,215.3 1498,216.1 1499,214.8 1500,218.0 1501,212.9 1502,213.1 1503,217.2 1504,217.6 1505,221.9 1506,220.0 1507,223.4 1508,223.2 1509,223.3 1510,215.8 1511,216.9 1512,214.1 1513,218.8 1514,215.1 1515,216.4 1516,217.9 1517,214.7 1518,214.0 1519,217.0 1520,221.5 1521,218.8 1522,216.5 1523,219.7 1524,216.4 1525,214.1 1526,220.7 1527,220.4 1528,221.8 1529,220.2 1530,223.7 1531,218.4 1532,218.7 1533,219.2 1534,221.5 1535,224.0 1536,223.1 1537,216.9 1538,220.8 1539,215.2 1540,214.6 1541,212.2 1542,217.4 1543,214.3 1544,223.1 1545,219.8 1546,214.4 1547,215.8 1548,221.9 1549,219.2 1550,214.8 1551,210.8 1552,215.1 1553,215.6 1554,220.1 1555,218.9 1556,213.5 1557,222.6 1558,219.9 1559,217.5 1560,213.8 1561,220.4 1562,213.2 1563,214.2 1564,212.1 1565,216.3 1566,217.8 1567,214.4 1568,207.4 1569,212.1 1570,213.2 1571,217.3 1572,220.0 1573,211.2 1574,213.2 1575,210.8 1576,219.3 1577,215.8 1578,219.7 1579,215.7 1580,214.8 1581,211.9 1582,212.8 1583,212.0 1584,214.8 1585,216.5 1586,214.9 1587,213.4 1588,213.0 1589,214.0 1590,214.1 1591,218.3 1592,224.6 1593,219.8 1594,212.0 1595,206.5 1596,208.3 1597,208.9 1598,211.9 1599,215.2 1600,209.8 1601,216.8 1602,217.9 1603,216.9 1604,221.4 1605,219.2 1606,218.1 1607,218.1 1608,220.2 1609,214.3 1610,214.7 1611,212.5 1612,216.3 1613,216.7 1614,217.1 1615,215.7 1616,219.1 1617,227.7 1618,216.5 1619,215.0 1620,216.7 1621,213.9 1622,212.7 1623,216.3 1624,217.2 1625,220.9 1626,213.3 1627,209.7 1628,219.0 1629,216.8 1630,211.0 1631,216.7 1632,211.5 1633,210.4 1634,216.1 1635,216.4 1636,226.1 1637,211.9 1638,217.0 1639,213.8 1640,216.9 1641,212.4 1642,217.9 1643,219.1 1644,217.7 1645,210.1 1646,212.1 1647,211.5 1648,214.3 1649,210.2 1650,215.5 1651,211.2 1652,219.1 1653,213.9 1654,213.7 1655,214.2 1656,214.6 1657,212.9 1658,221.2 1659,214.8 1660,219.1 1661,220.3 1662,215.9 1663,211.5 1664,221.7 1665,218.5 1666,217.0 1667,221.9 1668,219.5 1669,212.4 1670,216.6 1671,217.0 1672,220.4 1673,219.4 1674,230.0 1675,217.8 1676,222.6 1677,224.4 1678,215.3 1679,210.2 1680,212.0 1681,215.0 1682,216.0 1683,217.1 1684,222.1 1685,222.2 1686,214.9 1687,215.3 1688,214.5 1689,208.5 1690,208.7 1691,210.2 1692,213.6 1693,216.7 1694,216.7 1695,211.7 1696,217.6 1697,217.7 1698,222.6 1699,216.8 1700,215.4 1701,216.4 1702,214.2 1703,213.1 1704,210.8 1705,215.0 1706,220.7 1707,220.5 1708,220.5 1709,217.2 1710,216.8 1711,223.1 1712,217.7 1713,218.2 1714,219.3 1715,218.7 1716,219.5 1717,222.4 1718,221.4 1719,222.8 1720,222.1 1721,220.0 1722,224.2 1723,223.4 1724,226.8 1725,223.6 1726,227.3 1727,223.5 1728,215.7 1729,220.9 1730,222.0 1731,222.7 1732,222.1 1733,222.7 1734,219.5 1735,220.5 1736,219.6 1737,215.4 1738,223.4 1739,224.5 1740,228.3 1741,226.8 1742,219.1 1743,221.7 1744,223.8 1745,221.5 1746,221.0 1747,223.4 1748,226.9 1749,225.0 1750,227.6 1751,228.6 1752,223.9 1753,228.1 1754,231.5 1755,222.7 1756,215.9 1757,208.4 1758,217.0 1759,230.4 1760,229.6 1761,228.3 1762,228.6 1763,229.1 1764,224.1 1765,225.9 1766,227.1 1767,227.0 1768,225.4 1769,227.1 1770,230.5 1771,232.4 1772,225.8 1773,225.1 1774,229.7 1775,227.9 1776,225.3 1777,226.6 1778,226.5 1779,229.5 1780,234.3 1781,230.5 1782,230.0 1783,228.3 1784,230.5 1785,228.5 1786,231.2 1787,230.2 1788,230.9 1789,229.8 1790,233.0 1791,228.9 1792,229.3 1793,228.3 1794,227.4 1795,225.8 1796,225.7 1797,225.6 1798,229.6 1799,228.2 1800,231.3 1801,232.5 1802,229.9 1803,232.5 1804,231.4 1805,221.4 1806,219.6 1807,221.4 1808,222.3 1809,217.0 1810,219.5 1811,223.7 1812,218.6 1813,216.6 1814,218.6 1815,222.3 1816,223.3 1817,221.1 1818,216.7 1819,216.7 1820,216.5 1821,230.2 1822,219.7 1823,219.7 1824,219.2 1825,217.7 1826,218.3 1827,216.9 1828,216.2 1829,214.0 1830,211.9 1831,215.2 1832,212.1 1833,216.7 1834,215.4 1835,224.8 1836,213.9 1837,216.8 1838,219.3 1839,213.2 1840,213.2 1841,217.4 1842,215.3 1843,219.8 1844,220.7" fill="none" stroke="#e8e8ee" stroke-width="1.25" stroke-linejoin="round"/>
<g shape-rendering="crispEdges"><rect x="832" y="82" width="1014" height="2" fill="#a0a0a0"/><rect x="832" y="273" width="1014" height="1" fill="#a0a0a0"/><rect x="1844" y="82" width="2" height="192" fill="#a0a0a0"/><rect x="832" y="82" width="2" height="192" fill="#d84a4a"/></g>
</svg>
<div class="t " style="right:1056.7px;top:74.4px;font-size:16.5px;line-height:16.5px;color:#f4f4f4;">40.0</div>
<div class="t " style="right:1056.7px;top:113.4px;font-size:16.5px;line-height:16.5px;color:#f4f4f4;">20.0</div>
<div class="t " style="right:1056.7px;top:151.4px;font-size:16.5px;line-height:16.5px;color:#f4f4f4;">0.0</div>
<div class="t " style="right:1056.7px;top:190.4px;font-size:16.5px;line-height:16.5px;color:#f4f4f4;">-20.0</div>
<div class="t " style="right:1056.7px;top:228.4px;font-size:16.5px;line-height:16.5px;color:#f4f4f4;">-40.0</div>
<div class="t " style="right:1056.7px;top:265.4px;font-size:16.5px;line-height:16.5px;color:#f4f4f4;">-60.0</div>
<div class="t " style="left:368.3px;width:1000px;text-align:center;top:279.8px;font-size:16.5px;line-height:16.5px;color:#f4f4f4;">205.4</div>
<div class="t " style="left:466.3px;width:1000px;text-align:center;top:279.8px;font-size:16.5px;line-height:16.5px;color:#f4f4f4;">205.6</div>
<div class="t " style="left:565.3px;width:1000px;text-align:center;top:279.8px;font-size:16.5px;line-height:16.5px;color:#f4f4f4;">205.8</div>
<div class="t " style="left:664.3px;width:1000px;text-align:center;top:279.8px;font-size:16.5px;line-height:16.5px;color:#f4f4f4;">206</div>
<div class="t " style="left:763.3px;width:1000px;text-align:center;top:279.8px;font-size:16.5px;line-height:16.5px;color:#f4f4f4;">206.2</div>
<div class="t " style="left:862.3px;width:1000px;text-align:center;top:279.8px;font-size:16.5px;line-height:16.5px;color:#f4f4f4;">206.4</div>
<div class="t " style="left:961.3px;width:1000px;text-align:center;top:279.8px;font-size:16.5px;line-height:16.5px;color:#f4f4f4;">206.6</div>
<div class="t " style="left:1059.3px;width:1000px;text-align:center;top:279.8px;font-size:16.5px;line-height:16.5px;color:#f4f4f4;">206.8</div>
<div class="t " style="left:1158.3px;width:1000px;text-align:center;top:279.8px;font-size:16.5px;line-height:16.5px;color:#f4f4f4;">207</div>
<div class="t " style="left:1257.3px;width:1000px;text-align:center;top:279.8px;font-size:16.5px;line-height:16.5px;color:#f4f4f4;">207.2</div>
<div class="t " style="left:839.0px;width:1000px;text-align:center;top:304.7px;font-size:20px;line-height:20px;color:#f4f4f4;">Frequency (MHz)</div>
<div class="t" style="left:645.6px;top:169px;width:200px;text-align:center;font-size:19.5px;line-height:20px;color:#f4f4f4;transform:rotate(-90deg)">Magnitude (dB)</div>
<div class="a" style="left:0px;top:338px;width:1874px;height:6px;background:#8a8a8a;"></div>
<div class="a" style="left:0px;top:344px;width:1874px;height:49px;background:#262626;"></div>
<div class="a" style="left:31px;top:357px;width:75px;height:27px;border:1px solid #8a8a8a;border-radius:3px"></div>
<div class="t " style="left:34.0px;top:363.1px;font-size:15px;line-height:15px;color:#fff;">9C</div>
<svg width="1874" height="400"><path d="M78.5 366.8 L92.3 366.8 L85.4 374.4 Z" fill="#fff"/></svg>
<div class="a" style="left:119px;top:344px;width:1px;height:49px;background:#e8e8e8;"></div>
<div class="a" style="left:120px;top:344px;width:96px;height:49px;background:#b2171a;"></div>
<div class="a" style="left:120px;top:344px;width:96px;height:49px;overflow:hidden">
<div class="t " style="left:19.2px;top:18.9px;font-size:18.2px;line-height:18.2px;color:#f27a72;">EId: 10F2</div>
</div>
<div class="t " style="left:243.7px;top:362.2px;font-size:19px;line-height:19px;color:#e2e82a;">NDR SH KI</div>
<div class="t " style="left:362.0px;top:362.0px;font-size:19.3px;line-height:19.3px;color:#f2f2f2;">2021-01-27</div>
<div class="t " style="left:476.0px;top:362.5px;font-size:18.7px;line-height:18.7px;color:#f2f2f2;">14:49:50 Z</div>
<div class="a" style="left:619px;top:344px;width:3px;height:49px;background:#f0f0f0;"></div>
<div class="a" style="left:635px;top:357px;width:31px;height:27px;border:1px solid #8a8a8a;border-radius:3px"></div>
<svg width="1874" height="400">
<path d="M643.5 367.2 L657.5 367.2 L650.5 374.6 Z" fill="#fff"/>
<circle cx="709.8" cy="371" r="14" fill="#1f5f98"/>
<circle cx="710" cy="371.2" r="6.2" fill="#ff0000"/>
<circle cx="754" cy="371" r="14" fill="#1c476e"/>
<rect x="748" y="365" width="11" height="13" fill="#111"/>
</svg>
<div class="a" style="left:1839px;top:355.5px;width:60px;height:26px;border:1px solid #8a8a8a;border-radius:3px"></div>
<div class="t " style="left:1842.2px;top:361.1px;font-size:15px;line-height:15px;color:#fff;">DAB</div>
<div class="a" style="left:0px;top:393px;width:1874px;height:1px;background:#c8d4e0;"></div>
<div class="a" style="left:0px;top:394px;width:244px;height:43px;background:#0f2c55;"></div>
<div class="a" style="left:0;top:394px;width:244px;height:43px;overflow:hidden">
<div class="t " style="left:7.0px;top:9.3px;font-size:26px;line-height:26px;color:#eaf220;letter-spacing:0.3px">No Service Selected</div>
</div>
<div class="a" style="left:0px;top:437px;width:244px;height:527px;background:#1b5a8a;"></div>
<div class="t " style="left:8.0px;top:447.3px;font-size:18.6px;line-height:18.6px;color:#fff;">NDR 1 SH KI</div>
<div class="t " style="left:8.0px;top:478.9px;font-size:18.6px;line-height:18.6px;color:#fff;">NDR 2 SH</div>
<div class="t " style="left:8.0px;top:510.5px;font-size:18.6px;line-height:18.6px;color:#fff;">NDR Blue</div>
<div class="t " style="left:8.0px;top:542.1px;font-size:18.6px;line-height:18.6px;color:#fff;">NDR Info SH</div>
<div class="t " style="left:8.0px;top:573.7px;font-size:18.6px;line-height:18.6px;color:#fff;">NDR Info Spezial</div>
<div class="t " style="left:8.0px;top:605.3px;font-size:18.6px;line-height:18.6px;color:#fff;">NDR Kultur</div>
<div class="t " style="left:8.0px;top:636.9px;font-size:18.6px;line-height:18.6px;color:#fff;">NDR Plus</div>
<div class="t " style="left:8.0px;top:668.5px;font-size:18.6px;line-height:18.6px;color:#fff;">N-JOY</div>
<div class="t " style="left:8.0px;top:700.1px;font-size:18.6px;line-height:18.6px;color:#fff;">R.SH</div>
<div class="a" style="left:244px;top:394px;width:6px;height:570px;background:#eeeef2;"></div>
<div class="a" style="left:250px;top:394px;width:226px;height:43px;background:#0f2c55;"></div>
<div class="t " style="left:256.0px;top:403.5px;font-size:25px;line-height:25px;color:#fff;letter-spacing:0.8px">Service Quality</div>
<div class="a" style="left:250px;top:437px;width:226px;height:527px;background:#1b5a8a;"></div>
<div class="t " style="left:263.0px;top:459.6px;font-size:16.7px;line-height:16.7px;color:#fff;">SNR (dB)</div>
<div class="a" style="left:413px;top:450.5px;width:49px;height:31px;background:#8c8c8c;"></div>
<div class="a" style="left:413px;top:450.5px;width:9px;height:31px;background:#e00000;"></div>
<div class="t " style="left:-62.5px;width:1000px;text-align:center;top:459.6px;font-size:14px;line-height:14px;color:#fff;">6.6</div>
<div class="t " style="left:263.0px;top:498.3px;font-size:16.7px;line-height:16.7px;color:#fff;">FIC (ok %)</div>
<div class="a" style="left:413px;top:489.2px;width:49px;height:31px;background:#8c8c8c;"></div>
<div class="a" style="left:413px;top:489.2px;width:38.5px;height:31px;background:#ffa500;"></div>
<div class="t " style="left:-62.5px;width:1000px;text-align:center;top:498.3px;font-size:14px;line-height:14px;color:#fff;">77</div>
<div class="t " style="left:263.0px;top:537.0px;font-size:16.7px;line-height:16.7px;color:#fff;">RS (ok %)</div>
<div class="a" style="left:413px;top:527.9px;width:49px;height:31px;background:#8c8c8c;"></div>
<div class="t " style="left:263.0px;top:575.7px;font-size:16.7px;line-height:16.7px;color:#fff;">Null Symbol</div>
<div class="a" style="left:413px;top:566.6px;width:49px;height:31px;background:#8c8c8c;"></div>
<div class="a" style="left:413px;top:566.6px;width:49px;height:31px;background:#008000;"></div>
<div class="t " style="left:263.0px;top:614.4px;font-size:16.7px;line-height:16.7px;color:#fff;">SymbolTime (ms)</div>
<div class="a" style="left:413px;top:605.3px;width:49px;height:31px;background:#8c8c8c;"></div>
<div class="a" style="left:413px;top:605.3px;width:7px;height:31px;background:#008000;"></div>
<div class="t " style="left:-62.5px;width:1000px;text-align:center;top:614.4px;font-size:14px;line-height:14px;color:#fff;">0.23</div>
<div class="t " style="left:263.0px;top:653.1px;font-size:16.7px;line-height:16.7px;color:#fff;">FrameTime (ms)</div>
<div class="a" style="left:413px;top:644.0px;width:49px;height:31px;background:#8c8c8c;"></div>
<div class="a" style="left:413px;top:644.0px;width:31.5px;height:31px;background:#008000;"></div>
<div class="t " style="left:-62.5px;width:1000px;text-align:center;top:653.1px;font-size:14px;line-height:14px;color:#fff;">95.9</div>
<div class="a" style="left:476px;top:394px;width:4px;height:570px;background:#c4ccd6;"></div>
<div class="a" style="left:480px;top:394px;width:495px;height:44px;background:#0f2c55;"></div>
<div class="a" style="left:480px;top:437.6px;width:495px;height:527px;background:#1b5a8a;"></div>
<div class="a" style="left:480px;top:437.6px;width:8px;height:527px;background:#18527f;"></div>
<div class="a" style="left:490px;top:403.5px;width:74.39999999999998px;height:34.5px;background:#8a8a8a;border-radius:3px 12px 0 0"></div>
<div class="t " style="left:506.2px;top:413.6px;font-size:19.6px;line-height:19.6px;color:#e2e2e2;">Sync</div>
<div class="a" style="left:565.7px;top:403.5px;width:53.299999999999955px;height:34.5px;background:#1b5a8a;border-radius:3px 12px 0 0"></div>
<div class="t " style="left:581.0px;top:413.3px;font-size:20px;line-height:20px;color:#ffffff;">TII</div>
<div class="a" style="left:620.3px;top:403.5px;width:86.70000000000005px;height:34.5px;background:#8a8a8a;border-radius:3px 12px 0 0"></div>
<div class="t " style="left:636.5px;top:411.9px;font-size:21.6px;line-height:21.6px;color:#e2e2e2;">Audio</div>
<div class="a" style="left:709.7px;top:403.5px;width:70.09999999999991px;height:34.5px;background:#8a8a8a;border-radius:3px 12px 0 0"></div>
<div class="t " style="left:725.2px;top:413.4px;font-size:19.8px;line-height:19.8px;color:#e2e2e2;">AAC</div>
<div class="a" style="left:782px;top:403.5px;width:105.5px;height:34.5px;background:#8a8a8a;border-radius:3px 12px 0 0"></div>
<div class="t " style="left:797.5px;top:412.8px;font-size:20.6px;line-height:20.6px;color:#e2e2e2;">Options</div>
<svg width="1874" height="964">
<circle cx="529.7" cy="456" r="5" fill="#ff0000"/>
<rect x="560.2" y="450.5" width="10.6" height="10.9" fill="#0f2c55"/>
<line x1="499" y1="474.2" x2="809.4" y2="474.2" stroke="#8aa6c2" stroke-width="1"/>
<line x1="499" y1="519.3" x2="809.4" y2="519.3" stroke="#8aa6c2" stroke-width="1"/>
<line x1="821.3" y1="437.6" x2="821.3" y2="964" stroke="#3a6e9c" stroke-width="1"/>
</svg>
<div class="t " style="left:499.0px;top:498.7px;font-size:18.5px;line-height:18.5px;color:#fff;">Pattern</div>
<div class="t " style="left:583.4px;top:498.7px;font-size:18.5px;line-height:18.5px;color:#fff;">MainId</div>
<div class="t " style="left:665.4px;top:498.7px;font-size:18.5px;line-height:18.5px;color:#fff;">SubId</div>
<div class="t " style="left:738.0px;top:498.7px;font-size:18.5px;line-height:18.5px;color:#fff;">Strength</div>
<div class="t " style="left:501.4px;top:536.4px;font-size:17px;line-height:17px;color:#fff;">0x36</div>
<div class="t " style="left:586.0px;top:536.4px;font-size:17px;line-height:17px;color:#fff;">11</div>
<div class="t " style="left:669.5px;top:536.4px;font-size:17px;line-height:17px;color:#fff;">1</div>
<div class="t " style="left:740.0px;top:536.4px;font-size:17px;line-height:17px;color:#fff;">0.72</div>
<div class="t " style="left:827.7px;top:461.7px;font-size:17.1px;line-height:17.1px;color:#fff;">Threshold</div>
<div class="a" style="left:861px;top:501px;width:3px;height:133px;background:#e0e0e8;border-radius:1.5px"></div>
<div class="thumb" style="left:854.6px;top:633.6px;width:15.8px;height:15.8px"></div>
<div class="t " style="left:361.0px;width:1000px;text-align:center;top:660.2px;font-size:17px;line-height:17px;color:#fff;">0.02</div>
<div class="a" style="left:975px;top:394px;width:6px;height:570px;background:#eeeef2;"></div>
<div class="a" style="left:981px;top:394px;width:893px;height:26px;background:#0f2c55;"></div>
<div class="t " style="left:950.8px;width:1000px;text-align:center;top:397.6px;font-size:18px;line-height:18px;color:#fff;">Channel Impulse Response (CIR)</div>
<div class="a" style="left:981px;top:420px;width:893px;height:248px;background:#000;"></div>
<div class="radio" style="left:993.5px;top:434.1px;width:16.4px;height:16.4px"></div>
<div class="t " style="left:1015.6px;top:436.0px;font-size:14.2px;line-height:14.2px;color:#f2f2f2;">Freeze</div>
<div class="radio" style="left:1082.7px;top:434.1px;width:16.4px;height:16.4px"></div>
<div class="t " style="left:1104.4px;top:435.3px;font-size:15px;line-height:15px;color:#f2f2f2;">Gradient</div>
<div class="t " style="left:1000.6px;top:487.1px;font-size:15px;line-height:15px;color:#f2f2f2;">Smoothing Level</div>
<svg width="1874" height="964"><rect x="1002.2" y="509.8" width="1" height="4" fill="#bbb"/><rect x="1018.5" y="509.8" width="1" height="4" fill="#bbb"/><rect x="1034.9" y="509.8" width="1" height="4" fill="#bbb"/><rect x="1051.2" y="509.8" width="1" height="4" fill="#bbb"/><rect x="1067.5" y="509.8" width="1" height="4" fill="#bbb"/><rect x="1083.9" y="509.8" width="1" height="4" fill="#bbb"/><rect x="1100.2" y="509.8" width="1" height="4" fill="#bbb"/><rect x="1116.5" y="509.8" width="1" height="4" fill="#bbb"/><rect x="1132.8" y="509.8" width="1" height="4" fill="#bbb"/><rect x="1149.2" y="509.8" width="1" height="4" fill="#bbb"/><rect x="1165.5" y="509.8" width="1" height="4" fill="#bbb"/></svg>
<div class="a" style="left:995px;top:521px;width:171px;height:3px;background:#e6e6e6;border-radius:1.5px"></div>
<div class="thumb" style="left:1059.8px;top:515.2px;width:15.8px;height:15.8px"></div>
<div class="t " style="left:1000.6px;top:554.8px;font-size:15px;line-height:15px;color:#f2f2f2;">Zoom X</div>
<div class="a" style="left:995px;top:584.2px;width:171px;height:3px;background:#e6e6e6;border-radius:1.5px"></div>
<div class="thumb" style="left:994.1px;top:578.4000000000001px;width:15.8px;height:15.8px"></div>
<div class="t " style="left:1000.6px;top:616.5px;font-size:15px;line-height:15px;color:#f2f2f2;">Zoom Y</div>
<div class="a" style="left:995px;top:646.5px;width:171px;height:3px;background:#e6e6e6;border-radius:1.5px"></div>
<div class="thumb" style="left:994.1px;top:640.7px;width:15.8px;height:15.8px"></div>
<div class="a" style="left:1174.5px;top:421.6px;width:5px;height:168.4px;background:#a8a8a8;border-radius:2.5px"></div>
<svg width="1874" height="964">
<rect x="1337" y="440" width="107" height="173" fill="#414141"/>
<g shape-rendering="crispEdges"><rect x="1304" y="474" width="566" height="1" fill="rgba(255,255,255,0.6)"/><rect x="1304" y="509" width="566" height="1" fill="rgba(255,255,255,0.6)"/><rect x="1304" y="544" width="566" height="1" fill="rgba(255,255,255,0.6)"/><rect x="1304" y="580" width="566" height="1" fill="rgba(255,255,255,0.6)"/><rect x="1331" y="440" width="1" height="173" fill="rgba(255,255,255,0.6)"/><rect x="1369" y="440" width="1" height="173" fill="rgba(255,255,255,0.6)"/><rect x="1406" y="440" width="1" height="173" fill="rgba(255,255,255,0.6)"/><rect x="1482" y="440" width="1" height="173" fill="rgba(255,255,255,0.6)"/><rect x="1519" y="440" width="1" height="173" fill="rgba(255,255,255,0.6)"/><rect x="1557" y="440" width="1" height="173" fill="rgba(255,255,255,0.6)"/><rect x="1595" y="440" width="1" height="173" fill="rgba(255,255,255,0.6)"/><rect x="1633" y="440" width="1" height="173" fill="rgba(255,255,255,0.6)"/><rect x="1670" y="440" width="1" height="173" fill="rgba(255,255,255,0.6)"/><rect x="1708" y="440" width="1" height="173" fill="rgba(255,255,255,0.6)"/><rect x="1746" y="440" width="1" height="173" fill="rgba(255,255,255,0.6)"/><rect x="1784" y="440" width="1" height="173" fill="rgba(255,255,255,0.6)"/><rect x="1821" y="440" width="1" height="173" fill="rgba(255,255,255,0.6)"/><rect x="1859" y="440" width="1" height="173" fill="rgba(255,255,255,0.6)"/></g>
<line x1="1444.5" y1="440" x2="1444.5" y2="613" stroke="#e8e83a" stroke-width="1" stroke-dasharray="2,2"/>
<polyline points="1305,611.6 1306,603.8 1307,612.5 1308,607.1 1309,612.8 1310,613.5 1311,597.5 1312,594.9 1313,583.4 1314,598.4 1315,601.1 1316,601.7 1317,591.7 1318,598.0 1319,597.2 1320,608.0 1321,608.9 1322,611.7 1323,593.6 1324,600.4 1325,601.7 1326,597.4 1327,611.8 1328,598.9 1329,601.8 1330,603.1 1331,613.5 1332,606.4 1333,612.4 1334,613.5 1335,613.5 1336,593.0 1337,599.8 1338,599.1 1339,598.2 1340,594.0 1341,600.6 1342,606.0 1343,608.4 1344,603.0 1345,601.5 1346,608.1 1347,613.5 1348,599.6 1349,597.5 1350,601.7 1351,605.5 1352,599.3 1353,606.3 1354,607.0 1355,613.5 1356,604.7 1357,601.1 1358,605.8 1359,602.2 1360,607.6 1361,600.9 1362,604.2 1363,609.3 1364,596.1 1365,604.9 1366,593.6 1367,604.6 1368,607.0 1369,600.4 1370,600.4 1371,606.5 1372,608.1 1373,599.9 1374,601.7 1375,600.0 1376,596.6 1377,610.1 1378,595.2 1379,603.8 1380,606.4 1381,597.7 1382,596.2 1383,613.5 1384,606.5 1385,597.1 1386,597.5 1387,602.2 1388,613.4 1389,613.0 1390,598.7 1391,612.0 1392,600.6 1393,607.1 1394,609.4 1395,597.2 1396,596.7 1397,602.0 1398,609.5 1399,613.5 1400,603.7 1401,594.7 1402,598.7 1403,604.3 1404,611.2 1405,606.2 1406,603.5 1407,602.3 1408,599.2 1409,613.5 1410,602.6 1411,600.9 1412,595.9 1413,596.1 1414,605.4 1415,599.0 1416,596.1 1417,604.8 1418,613.5 1419,613.5 1420,605.6 1421,609.7 1422,611.2 1423,598.9 1424,589.8 1425,593.1 1426,597.2 1427,601.0 1428,603.9 1429,591.3 1430,597.3 1431,592.4 1432,596.9 1433,608.0 1434,613.5 1435,605.2 1436,587.5 1437,602.1 1438,607.1 1439,607.4 1440,612.5 1441,599.2 1442,583.4 1443,567.7 1444,551.9 1445,551.9 1446,567.7 1447,583.4 1448,599.2 1449,608.5 1450,608.9 1451,612.1 1452,613.5 1453,589.3 1454,600.8 1455,608.8 1456,592.2 1457,593.3 1458,596.4 1459,602.6 1460,603.1 1461,602.1 1462,606.9 1463,602.3 1464,600.2 1465,596.9 1466,609.8 1467,603.0 1468,604.2 1469,606.4 1470,594.1 1471,595.5 1472,607.8 1473,596.9 1474,613.0 1475,594.7 1476,578.0 1477,575.7 1478,592.4 1479,611.7 1480,607.1 1481,613.5 1482,606.9 1483,613.5 1484,600.3 1485,605.8 1486,603.7 1487,597.4 1488,605.8 1489,613.5 1490,613.5 1491,604.2 1492,603.1 1493,606.1 1494,598.8 1495,602.3 1496,606.4 1497,601.9 1498,595.2 1499,607.6 1500,600.7 1501,609.0 1502,612.4 1503,613.5 1504,613.5 1505,602.7 1506,613.5 1507,603.9 1508,605.8 1509,601.0 1510,599.0 1511,591.6 1512,592.1 1513,594.8 1514,588.6 1515,606.8 1516,613.5 1517,613.5 1518,609.6 1519,604.7 1520,591.5 1521,611.4 1522,607.1 1523,601.1 1524,590.5 1525,597.0 1526,599.9 1527,601.7 1528,608.8 1529,602.1 1530,603.2 1531,600.3 1532,595.7 1533,599.4 1534,585.3 1535,598.4 1536,611.5 1537,613.5 1538,602.0 1539,601.2 1540,607.5 1541,602.8 1542,613.5 1543,600.2 1544,609.4 1545,613.5 1546,601.4 1547,603.7 1548,603.4 1549,606.9 1550,608.1 1551,610.2 1552,597.5 1553,613.5 1554,592.3 1555,587.6 1556,613.5 1557,609.6 1558,598.9 1559,604.0 1560,601.6 1561,610.4 1562,608.3 1563,595.7 1564,601.1 1565,611.8 1566,612.9 1567,602.8 1568,596.9 1569,603.0 1570,604.8 1571,612.8 1572,608.3 1573,610.0 1574,612.8 1575,607.1 1576,603.7 1577,597.4 1578,592.1 1579,599.5 1580,604.2 1581,590.8 1582,592.6 1583,594.8 1584,601.3 1585,604.0 1586,611.0 1587,608.8 1588,607.3 1589,604.2 1590,601.7 1591,612.1 1592,603.0 1593,609.4 1594,609.0 1595,589.0 1596,598.7 1597,591.2 1598,590.0 1599,602.1 1600,598.9 1601,609.8 1602,610.8 1603,605.9 1604,585.8 1605,595.0 1606,600.0 1607,604.5 1608,606.0 1609,595.8 1610,595.7 1611,606.1 1612,599.0 1613,602.3 1614,613.5 1615,604.4 1616,612.5 1617,611.2 1618,603.8 1619,613.5 1620,613.5 1621,611.0 1622,613.5 1623,598.5 1624,594.0 1625,607.2 1626,607.8 1627,604.6 1628,606.5 1629,599.6 1630,599.4 1631,602.8 1632,599.6 1633,604.4 1634,601.3 1635,589.0 1636,606.1 1637,602.6 1638,608.5 1639,592.3 1640,605.2 1641,608.3 1642,600.5 1643,599.5 1644,594.1 1645,595.8 1646,608.1 1647,591.4 1648,606.4 1649,613.5 1650,613.5 1651,600.4 1652,599.1 1653,592.5 1654,594.3 1655,602.8 1656,606.0 1657,604.2 1658,599.1 1659,601.3 1660,609.4 1661,609.2 1662,612.3 1663,610.4 1664,613.5 1665,613.5 1666,613.5 1667,596.2 1668,611.7 1669,609.3 1670,613.5 1671,601.6 1672,594.2 1673,598.0 1674,597.7 1675,599.2 1676,602.4 1677,610.0 1678,613.5 1679,613.5 1680,599.4 1681,602.4 1682,598.8 1683,605.8 1684,607.0 1685,599.5 1686,592.2 1687,596.4 1688,608.0 1689,599.8 1690,605.3 1691,608.8 1692,604.8 1693,601.9 1694,609.2 1695,608.6 1696,585.3 1697,589.6 1698,598.1 1699,603.7 1700,612.4 1701,608.9 1702,600.7 1703,613.5 1704,613.5 1705,591.5 1706,594.4 1707,599.1 1708,604.4 1709,597.6 1710,597.1 1711,612.5 1712,613.4 1713,613.5 1714,601.8 1715,600.8 1716,594.5 1717,597.5 1718,606.4 1719,607.1 1720,597.7 1721,602.7 1722,606.1 1723,592.2 1724,593.6 1725,604.2 1726,608.5 1727,584.7 1728,595.6 1729,604.8 1730,607.6 1731,606.7 1732,598.9 1733,602.1 1734,598.6 1735,593.7 1736,603.0 1737,602.0 1738,605.6 1739,608.8 1740,613.5 1741,602.8 1742,610.9 1743,604.2 1744,600.9 1745,596.4 1746,604.4 1747,602.5 1748,613.5 1749,608.7 1750,604.7 1751,592.3 1752,600.9 1753,596.7 1754,600.4 1755,597.3 1756,597.3 1757,597.2 1758,609.4 1759,598.7 1760,606.6 1761,598.0 1762,593.4 1763,602.7 1764,613.5 1765,610.8 1766,609.2 1767,613.5 1768,612.1 1769,611.3 1770,600.5 1771,593.0 1772,589.0 1773,603.3 1774,605.3 1775,600.4 1776,610.6 1777,609.4 1778,591.8 1779,597.3 1780,605.1 1781,599.9 1782,601.4 1783,605.9 1784,609.1 1785,612.0 1786,593.5 1787,606.1 1788,603.7 1789,599.8 1790,595.1 1791,594.1 1792,595.8 1793,592.1 1794,601.8 1795,610.1 1796,613.0 1797,613.5 1798,610.2 1799,611.8 1800,602.6 1801,611.2 1802,607.5 1803,605.9 1804,602.3 1805,604.1 1806,612.6 1807,608.8 1808,606.8 1809,611.3 1810,606.3 1811,609.3 1812,606.4 1813,604.3 1814,601.3 1815,609.5 1816,613.5 1817,606.3 1818,593.6 1819,590.4 1820,592.1 1821,599.3 1822,602.1 1823,604.1 1824,601.6 1825,607.8 1826,601.3 1827,588.8 1828,595.6 1829,584.0 1830,604.0 1831,607.9 1832,590.6 1833,595.7 1834,606.1 1835,588.5 1836,613.2 1837,602.0 1838,590.2 1839,599.7 1840,607.9 1841,605.9 1842,607.8 1843,607.5 1844,604.0 1845,604.8 1846,608.2 1847,611.2 1848,613.5 1849,601.3 1850,608.6 1851,596.5 1852,605.4 1853,588.1 1854,588.0 1855,600.0 1856,602.7 1857,603.3 1858,591.4 1859,599.1 1860,607.0 1861,599.2 1862,579.6 1863,598.4 1864,608.3 1865,601.6 1866,595.2 1867,606.9 1868,613.5 1869,601.6" fill="none" stroke="#ececec" stroke-width="1.3" stroke-linejoin="round"/>
<g shape-rendering="crispEdges"><rect x="1304" y="438" width="567" height="2" fill="#a0a0a0"/><rect x="1304" y="613" width="567" height="2" fill="#a0a0a0"/><rect x="1304" y="438" width="1" height="177" fill="#a0a0a0"/><rect x="1869" y="438" width="2" height="177" fill="#a0a0a0"/></g>
<circle cx="1444.8" cy="544.5" r="4.8" fill="#f2e600"/>
<circle cx="1476.3" cy="568.2" r="4.8" fill="#e01010"/>
</svg>
<div class="t " style="right:579.8px;top:430.4px;font-size:16.5px;line-height:16.5px;color:#f4f4f4;">-10.0</div>
<div class="t " style="right:579.8px;top:466.4px;font-size:16.5px;line-height:16.5px;color:#f4f4f4;">-20.0</div>
<div class="t " style="right:579.8px;top:501.4px;font-size:16.5px;line-height:16.5px;color:#f4f4f4;">-30.0</div>
<div class="t " style="right:579.8px;top:536.4px;font-size:16.5px;line-height:16.5px;color:#f4f4f4;">-40.0</div>
<div class="t " style="right:579.8px;top:572.4px;font-size:16.5px;line-height:16.5px;color:#f4f4f4;">-50.0</div>
<div class="t " style="right:579.8px;top:605.4px;font-size:16.5px;line-height:16.5px;color:#f4f4f4;">-60.0</div>
<div class="t " style="left:831.3px;width:1000px;text-align:center;top:621.2px;font-size:12.5px;line-height:12.5px;color:#f4f4f4;">-60</div>
<div class="t " style="left:869.0px;width:1000px;text-align:center;top:621.2px;font-size:12.5px;line-height:12.5px;color:#f4f4f4;">-40</div>
<div class="t " style="left:906.8px;width:1000px;text-align:center;top:621.2px;font-size:12.5px;line-height:12.5px;color:#f4f4f4;">-20</div>
<div class="t " style="left:944.5px;width:1000px;text-align:center;top:621.2px;font-size:12.5px;line-height:12.5px;color:#f4f4f4;">0</div>
<div class="t " style="left:982.2px;width:1000px;text-align:center;top:621.2px;font-size:12.5px;line-height:12.5px;color:#f4f4f4;">20</div>
<div class="t " style="left:1020.0px;width:1000px;text-align:center;top:621.2px;font-size:12.5px;line-height:12.5px;color:#f4f4f4;">40</div>
<div class="t " style="left:1057.7px;width:1000px;text-align:center;top:621.2px;font-size:12.5px;line-height:12.5px;color:#f4f4f4;">60</div>
<div class="t " style="left:1095.4px;width:1000px;text-align:center;top:621.2px;font-size:12.5px;line-height:12.5px;color:#f4f4f4;">80</div>
<div class="t " style="left:1133.2px;width:1000px;text-align:center;top:621.2px;font-size:12.5px;line-height:12.5px;color:#f4f4f4;">100</div>
<div class="t " style="left:1170.9px;width:1000px;text-align:center;top:621.2px;font-size:12.5px;line-height:12.5px;color:#f4f4f4;">120</div>
<div class="t " style="left:1208.6px;width:1000px;text-align:center;top:621.2px;font-size:12.5px;line-height:12.5px;color:#f4f4f4;">140</div>
<div class="t " style="left:1246.3px;width:1000px;text-align:center;top:621.2px;font-size:12.5px;line-height:12.5px;color:#f4f4f4;">160</div>
<div class="t " style="left:1284.1px;width:1000px;text-align:center;top:621.2px;font-size:12.5px;line-height:12.5px;color:#f4f4f4;">180</div>
<div class="t " style="left:1321.8px;width:1000px;text-align:center;top:621.2px;font-size:12.5px;line-height:12.5px;color:#f4f4f4;">200</div>
<div class="t " style="left:1359.5px;width:1000px;text-align:center;top:621.2px;font-size:12.5px;line-height:12.5px;color:#f4f4f4;">220</div>
<div class="t " style="left:1087.8px;width:1000px;text-align:center;top:638.5px;font-size:16.8px;line-height:16.8px;color:#f4f4f4;">Distance Difference (km)</div>
<div class="t" style="left:1127px;top:517.8px;width:200px;text-align:center;font-size:15.4px;font-weight:bold;line-height:18px;color:#f4f4f4;transform:rotate(-90deg)">Magnitude (dB)</div>
<div class="a" style="left:981px;top:668px;width:893px;height:6px;background:#8a8a8a;"></div>
<div class="a" style="left:981px;top:674px;width:893px;height:25.4px;background:#0f2c55;"></div>
<div class="t " style="left:950.8px;width:1000px;text-align:center;top:677.3px;font-size:18px;line-height:18px;color:#fff;">TII Carriers</div>
<div class="a" style="left:981px;top:699.4px;width:893px;height:265px;background:#000;"></div>
<svg width="1874" height="964">
<g shape-rendering="crispEdges"><rect x="1096" y="870" width="767" height="1" fill="rgba(255,255,255,0.6)"/><rect x="1096" y="833" width="767" height="1" fill="rgba(255,255,255,0.6)"/><rect x="1096" y="795" width="767" height="1" fill="rgba(255,255,255,0.6)"/><rect x="1096" y="757" width="767" height="1" fill="rgba(255,255,255,0.6)"/><rect x="1143" y="720" width="1" height="186" fill="rgba(255,255,255,0.6)"/><rect x="1218" y="720" width="1" height="186" fill="rgba(255,255,255,0.6)"/><rect x="1293" y="720" width="1" height="186" fill="rgba(255,255,255,0.6)"/><rect x="1368" y="720" width="1" height="186" fill="rgba(255,255,255,0.6)"/><rect x="1442" y="720" width="1" height="186" fill="rgba(255,255,255,0.6)"/><rect x="1517" y="720" width="1" height="186" fill="rgba(255,255,255,0.6)"/><rect x="1592" y="720" width="1" height="186" fill="rgba(255,255,255,0.6)"/><rect x="1667" y="720" width="1" height="186" fill="rgba(255,255,255,0.6)"/><rect x="1742" y="720" width="1" height="186" fill="rgba(255,255,255,0.6)"/><rect x="1816" y="720" width="1" height="186" fill="rgba(255,255,255,0.6)"/></g>
<g shape-rendering="crispEdges"><rect x="1195" y="856.9" width="1" height="49.1" fill="#a0a0a0"/><rect x="1196" y="863.1" width="1" height="42.9" fill="#989898"/><rect x="1197" y="902.9" width="1" height="3.1" fill="#a8a8a8"/><rect x="1198" y="904.4" width="1" height="1.6" fill="#b0b0b0"/><rect x="1199" y="896.4" width="1" height="9.6" fill="#a8a8a8"/><rect x="1202" y="901.1" width="1" height="4.9" fill="#a8a8a8"/><rect x="1203" y="891.8" width="1" height="14.2" fill="#b0b0b0"/><rect x="1204" y="894.0" width="1" height="12.0" fill="#a0a0a0"/><rect x="1205" y="866.4" width="1" height="39.6" fill="#989898"/><rect x="1206" y="885.9" width="1" height="20.1" fill="#a8a8a8"/><rect x="1207" y="901.8" width="1" height="4.2" fill="#a0a0a0"/><rect x="1208" y="875.1" width="1" height="30.9" fill="#b0b0b0"/><rect x="1209" y="879.7" width="1" height="26.3" fill="#a8a8a8"/><rect x="1210" y="901.4" width="1" height="4.6" fill="#b0b0b0"/><rect x="1211" y="868.7" width="1" height="37.3" fill="#a0a0a0"/><rect x="1212" y="878.1" width="1" height="27.9" fill="#b0b0b0"/><rect x="1213" y="904.1" width="1" height="1.9" fill="#989898"/><rect x="1214" y="825.5" width="1" height="80.5" fill="#989898"/><rect x="1215" y="833.6" width="1" height="72.4" fill="#989898"/><rect x="1217" y="862.5" width="1" height="43.5" fill="#989898"/><rect x="1218" y="806.5" width="1" height="99.5" fill="#a0a0a0"/><rect x="1219" y="881.7" width="1" height="24.3" fill="#a8a8a8"/><rect x="1220" y="893.1" width="1" height="12.9" fill="#a8a8a8"/><rect x="1221" y="890.4" width="1" height="15.6" fill="#a8a8a8"/><rect x="1222" y="852.6" width="1" height="53.4" fill="#b0b0b0"/><rect x="1223" y="814.7" width="1" height="91.3" fill="#a8a8a8"/><rect x="1224" y="869.8" width="1" height="36.2" fill="#989898"/><rect x="1225" y="805.4" width="1" height="100.6" fill="#989898"/><rect x="1226" y="827.5" width="1" height="78.5" fill="#989898"/><rect x="1227" y="900.5" width="1" height="5.5" fill="#989898"/><rect x="1228" y="884.6" width="1" height="21.4" fill="#b0b0b0"/><rect x="1229" y="902.2" width="1" height="3.8" fill="#b0b0b0"/><rect x="1230" y="834.8" width="1" height="71.2" fill="#989898"/><rect x="1231" y="818.9" width="1" height="87.1" fill="#a8a8a8"/><rect x="1232" y="800.6" width="1" height="105.4" fill="#a8a8a8"/><rect x="1233" y="901.3" width="1" height="4.7" fill="#b0b0b0"/><rect x="1234" y="902.2" width="1" height="3.8" fill="#b0b0b0"/><rect x="1235" y="848.9" width="1" height="57.1" fill="#b0b0b0"/><rect x="1236" y="825.5" width="1" height="80.5" fill="#a0a0a0"/><rect x="1237" y="850.0" width="1" height="56.0" fill="#a8a8a8"/><rect x="1238" y="903.4" width="1" height="2.6" fill="#a8a8a8"/><rect x="1239" y="895.5" width="1" height="10.5" fill="#b0b0b0"/><rect x="1240" y="903.4" width="1" height="2.6" fill="#b0b0b0"/><rect x="1241" y="904.9" width="1" height="1.1" fill="#989898"/><rect x="1242" y="883.0" width="1" height="23.0" fill="#a0a0a0"/><rect x="1243" y="827.5" width="1" height="78.5" fill="#989898"/><rect x="1244" y="878.7" width="1" height="27.3" fill="#989898"/><rect x="1245" y="838.6" width="1" height="67.4" fill="#989898"/><rect x="1246" y="903.9" width="1" height="2.1" fill="#b0b0b0"/><rect x="1247" y="850.3" width="1" height="55.7" fill="#a0a0a0"/><rect x="1248" y="825.3" width="1" height="80.7" fill="#989898"/><rect x="1249" y="870.7" width="1" height="35.3" fill="#a8a8a8"/><rect x="1250" y="841.6" width="1" height="64.4" fill="#a8a8a8"/><rect x="1251" y="900.5" width="1" height="5.5" fill="#b0b0b0"/><rect x="1252" y="900.7" width="1" height="5.3" fill="#989898"/><rect x="1253" y="903.3" width="1" height="2.7" fill="#a0a0a0"/><rect x="1254" y="858.6" width="1" height="47.4" fill="#b0b0b0"/><rect x="1255" y="881.9" width="1" height="24.1" fill="#a0a0a0"/><rect x="1257" y="902.6" width="1" height="3.4" fill="#b0b0b0"/><rect x="1258" y="828.2" width="1" height="77.8" fill="#a0a0a0"/><rect x="1259" y="855.6" width="1" height="50.4" fill="#989898"/><rect x="1260" y="904.0" width="1" height="2.0" fill="#a8a8a8"/><rect x="1261" y="903.4" width="1" height="2.6" fill="#a0a0a0"/><rect x="1262" y="904.3" width="1" height="1.7" fill="#b0b0b0"/><rect x="1263" y="816.2" width="1" height="89.8" fill="#b0b0b0"/><rect x="1264" y="837.9" width="1" height="68.1" fill="#b0b0b0"/><rect x="1265" y="901.3" width="1" height="4.7" fill="#b0b0b0"/><rect x="1266" y="858.1" width="1" height="47.9" fill="#a8a8a8"/><rect x="1267" y="856.3" width="1" height="49.7" fill="#a8a8a8"/><rect x="1268" y="900.7" width="1" height="5.3" fill="#989898"/><rect x="1269" y="793.8" width="1" height="112.2" fill="#a0a0a0"/><rect x="1270" y="900.1" width="1" height="5.9" fill="#a8a8a8"/><rect x="1271" y="893.0" width="1" height="13.0" fill="#989898"/><rect x="1272" y="884.9" width="1" height="21.1" fill="#a8a8a8"/><rect x="1273" y="902.9" width="1" height="3.1" fill="#b0b0b0"/><rect x="1274" y="902.8" width="1" height="3.2" fill="#a0a0a0"/><rect x="1275" y="890.7" width="1" height="15.3" fill="#989898"/><rect x="1276" y="867.3" width="1" height="38.7" fill="#a0a0a0"/><rect x="1277" y="902.8" width="1" height="3.2" fill="#989898"/><rect x="1278" y="840.9" width="1" height="65.1" fill="#a8a8a8"/><rect x="1279" y="853.9" width="1" height="52.1" fill="#a8a8a8"/><rect x="1280" y="864.5" width="1" height="41.5" fill="#a0a0a0"/><rect x="1281" y="902.3" width="1" height="3.7" fill="#a0a0a0"/><rect x="1282" y="855.8" width="1" height="50.2" fill="#b0b0b0"/><rect x="1283" y="793.8" width="1" height="112.2" fill="#a0a0a0"/><rect x="1284" y="857.8" width="1" height="48.2" fill="#a0a0a0"/><rect x="1285" y="855.1" width="1" height="50.9" fill="#b0b0b0"/><rect x="1286" y="904.1" width="1" height="1.9" fill="#989898"/><rect x="1287" y="832.4" width="1" height="73.6" fill="#989898"/><rect x="1288" y="817.3" width="1" height="88.7" fill="#a8a8a8"/><rect x="1289" y="868.3" width="1" height="37.7" fill="#a0a0a0"/><rect x="1290" y="836.2" width="1" height="69.8" fill="#b0b0b0"/><rect x="1291" y="841.6" width="1" height="64.4" fill="#b0b0b0"/><rect x="1292" y="902.3" width="1" height="3.7" fill="#a0a0a0"/><rect x="1293" y="820.2" width="1" height="85.8" fill="#989898"/><rect x="1294" y="837.0" width="1" height="69.0" fill="#a0a0a0"/><rect x="1295" y="900.8" width="1" height="5.2" fill="#989898"/><rect x="1297" y="891.1" width="1" height="14.9" fill="#989898"/><rect x="1298" y="843.6" width="1" height="62.4" fill="#a8a8a8"/><rect x="1299" y="847.2" width="1" height="58.8" fill="#989898"/><rect x="1300" y="904.0" width="1" height="2.0" fill="#a0a0a0"/><rect x="1301" y="889.3" width="1" height="16.7" fill="#a8a8a8"/><rect x="1302" y="861.4" width="1" height="44.6" fill="#a0a0a0"/><rect x="1303" y="838.2" width="1" height="67.8" fill="#a0a0a0"/><rect x="1304" y="853.8" width="1" height="52.2" fill="#a0a0a0"/><rect x="1305" y="901.5" width="1" height="4.5" fill="#a0a0a0"/><rect x="1306" y="904.6" width="1" height="1.4" fill="#a0a0a0"/><rect x="1307" y="900.3" width="1" height="5.7" fill="#b0b0b0"/><rect x="1309" y="903.1" width="1" height="2.9" fill="#b0b0b0"/><rect x="1310" y="900.8" width="1" height="5.2" fill="#a0a0a0"/><rect x="1311" y="843.7" width="1" height="62.3" fill="#a0a0a0"/><rect x="1312" y="866.0" width="1" height="40.0" fill="#a8a8a8"/><rect x="1313" y="875.4" width="1" height="30.6" fill="#a8a8a8"/><rect x="1314" y="903.3" width="1" height="2.7" fill="#989898"/><rect x="1315" y="891.9" width="1" height="14.1" fill="#a8a8a8"/><rect x="1316" y="809.3" width="1" height="96.7" fill="#989898"/><rect x="1317" y="900.8" width="1" height="5.2" fill="#989898"/><rect x="1318" y="898.0" width="1" height="8.0" fill="#b0b0b0"/><rect x="1319" y="815.7" width="1" height="90.3" fill="#a8a8a8"/><rect x="1320" y="823.4" width="1" height="82.6" fill="#a0a0a0"/><rect x="1321" y="876.8" width="1" height="29.2" fill="#b0b0b0"/><rect x="1322" y="872.9" width="1" height="33.1" fill="#b0b0b0"/><rect x="1324" y="879.0" width="1" height="27.0" fill="#989898"/><rect x="1325" y="900.7" width="1" height="5.3" fill="#a0a0a0"/><rect x="1326" y="868.8" width="1" height="37.2" fill="#a0a0a0"/><rect x="1327" y="889.6" width="1" height="16.4" fill="#989898"/><rect x="1328" y="902.0" width="1" height="4.0" fill="#b0b0b0"/><rect x="1329" y="863.3" width="1" height="42.7" fill="#b0b0b0"/><rect x="1330" y="860.5" width="1" height="45.5" fill="#a8a8a8"/><rect x="1331" y="844.9" width="1" height="61.1" fill="#b0b0b0"/><rect x="1333" y="902.0" width="1" height="4.0" fill="#989898"/><rect x="1334" y="904.4" width="1" height="1.6" fill="#a8a8a8"/><rect x="1335" y="829.7" width="1" height="76.3" fill="#989898"/><rect x="1336" y="900.5" width="1" height="5.5" fill="#a0a0a0"/><rect x="1337" y="890.8" width="1" height="15.2" fill="#b0b0b0"/><rect x="1338" y="903.8" width="1" height="2.2" fill="#989898"/><rect x="1339" y="901.5" width="1" height="4.5" fill="#989898"/><rect x="1340" y="852.2" width="1" height="53.8" fill="#a8a8a8"/><rect x="1341" y="903.1" width="1" height="2.9" fill="#a8a8a8"/><rect x="1342" y="902.2" width="1" height="3.8" fill="#989898"/><rect x="1343" y="850.8" width="1" height="55.2" fill="#b0b0b0"/><rect x="1344" y="809.6" width="1" height="96.4" fill="#a0a0a0"/><rect x="1345" y="866.7" width="1" height="39.3" fill="#a8a8a8"/><rect x="1347" y="832.5" width="1" height="73.5" fill="#989898"/><rect x="1348" y="900.8" width="1" height="5.2" fill="#a8a8a8"/><rect x="1349" y="841.7" width="1" height="64.3" fill="#989898"/><rect x="1350" y="833.8" width="1" height="72.2" fill="#a8a8a8"/><rect x="1352" y="865.1" width="1" height="40.9" fill="#b0b0b0"/><rect x="1353" y="856.7" width="1" height="49.3" fill="#989898"/><rect x="1354" y="902.1" width="1" height="3.9" fill="#989898"/><rect x="1355" y="904.4" width="1" height="1.6" fill="#989898"/><rect x="1356" y="900.7" width="1" height="5.3" fill="#a0a0a0"/><rect x="1357" y="844.0" width="1" height="62.0" fill="#b0b0b0"/><rect x="1358" y="856.9" width="1" height="49.1" fill="#989898"/><rect x="1359" y="901.0" width="1" height="5.0" fill="#989898"/><rect x="1361" y="888.9" width="1" height="17.1" fill="#a0a0a0"/><rect x="1362" y="804.0" width="1" height="102.0" fill="#a0a0a0"/><rect x="1363" y="849.6" width="1" height="56.4" fill="#a8a8a8"/><rect x="1364" y="832.2" width="1" height="73.8" fill="#a0a0a0"/><rect x="1366" y="896.4" width="1" height="9.6" fill="#989898"/><rect x="1367" y="842.7" width="1" height="63.3" fill="#a0a0a0"/><rect x="1368" y="887.9" width="1" height="18.1" fill="#a8a8a8"/><rect x="1369" y="841.7" width="1" height="64.3" fill="#b0b0b0"/><rect x="1372" y="834.1" width="1" height="71.9" fill="#989898"/><rect x="1373" y="818.1" width="1" height="87.9" fill="#a8a8a8"/><rect x="1374" y="877.0" width="1" height="29.0" fill="#a0a0a0"/><rect x="1375" y="904.1" width="1" height="1.9" fill="#a0a0a0"/><rect x="1376" y="903.6" width="1" height="2.4" fill="#a8a8a8"/><rect x="1377" y="891.5" width="1" height="14.5" fill="#b0b0b0"/><rect x="1378" y="901.3" width="1" height="4.7" fill="#a8a8a8"/><rect x="1379" y="793.8" width="1" height="112.2" fill="#989898"/><rect x="1380" y="902.8" width="1" height="3.2" fill="#b0b0b0"/><rect x="1381" y="900.5" width="1" height="5.5" fill="#a8a8a8"/><rect x="1382" y="857.1" width="1" height="48.9" fill="#989898"/><rect x="1383" y="832.4" width="1" height="73.6" fill="#b0b0b0"/><rect x="1384" y="835.8" width="1" height="70.2" fill="#a0a0a0"/><rect x="1385" y="833.6" width="1" height="72.4" fill="#b0b0b0"/><rect x="1386" y="802.7" width="1" height="103.3" fill="#989898"/><rect x="1387" y="863.3" width="1" height="42.7" fill="#989898"/><rect x="1388" y="879.3" width="1" height="26.7" fill="#989898"/><rect x="1389" y="839.8" width="1" height="66.2" fill="#a0a0a0"/><rect x="1390" y="834.5" width="1" height="71.5" fill="#a8a8a8"/><rect x="1391" y="863.9" width="1" height="42.1" fill="#b0b0b0"/><rect x="1392" y="900.8" width="1" height="5.2" fill="#a0a0a0"/><rect x="1393" y="899.0" width="1" height="7.0" fill="#989898"/><rect x="1394" y="904.4" width="1" height="1.6" fill="#a0a0a0"/><rect x="1395" y="903.8" width="1" height="2.2" fill="#989898"/><rect x="1396" y="864.0" width="1" height="42.0" fill="#a8a8a8"/><rect x="1398" y="887.4" width="1" height="18.6" fill="#a0a0a0"/><rect x="1399" y="876.5" width="1" height="29.5" fill="#a8a8a8"/><rect x="1400" y="903.2" width="1" height="2.8" fill="#a0a0a0"/><rect x="1401" y="844.7" width="1" height="61.3" fill="#b0b0b0"/><rect x="1402" y="833.3" width="1" height="72.7" fill="#989898"/><rect x="1403" y="827.6" width="1" height="78.4" fill="#989898"/><rect x="1404" y="844.9" width="1" height="61.1" fill="#a0a0a0"/><rect x="1405" y="868.8" width="1" height="37.2" fill="#989898"/><rect x="1406" y="865.2" width="1" height="40.8" fill="#a0a0a0"/><rect x="1407" y="884.7" width="1" height="21.3" fill="#a0a0a0"/><rect x="1408" y="901.0" width="1" height="5.0" fill="#989898"/><rect x="1409" y="904.5" width="1" height="1.5" fill="#a8a8a8"/><rect x="1410" y="901.3" width="1" height="4.7" fill="#989898"/><rect x="1411" y="879.1" width="1" height="26.9" fill="#b0b0b0"/><rect x="1412" y="841.1" width="1" height="64.9" fill="#989898"/><rect x="1414" y="793.8" width="1" height="112.2" fill="#a0a0a0"/><rect x="1415" y="857.5" width="1" height="48.5" fill="#a0a0a0"/><rect x="1416" y="795.8" width="1" height="110.2" fill="#989898"/><rect x="1417" y="793.8" width="1" height="112.2" fill="#989898"/><rect x="1418" y="878.4" width="1" height="27.6" fill="#a0a0a0"/><rect x="1419" y="836.2" width="1" height="69.8" fill="#b0b0b0"/><rect x="1420" y="904.5" width="1" height="1.5" fill="#a8a8a8"/><rect x="1421" y="900.4" width="1" height="5.6" fill="#b0b0b0"/><rect x="1422" y="866.9" width="1" height="39.1" fill="#b0b0b0"/><rect x="1423" y="822.2" width="1" height="83.8" fill="#a0a0a0"/><rect x="1424" y="903.2" width="1" height="2.8" fill="#a8a8a8"/><rect x="1425" y="868.5" width="1" height="37.5" fill="#989898"/><rect x="1426" y="904.5" width="1" height="1.5" fill="#989898"/><rect x="1427" y="861.4" width="1" height="44.6" fill="#a0a0a0"/><rect x="1428" y="901.7" width="1" height="4.3" fill="#989898"/><rect x="1429" y="879.2" width="1" height="26.8" fill="#a8a8a8"/><rect x="1430" y="872.8" width="1" height="33.2" fill="#989898"/><rect x="1431" y="837.3" width="1" height="68.7" fill="#989898"/><rect x="1432" y="804.6" width="1" height="101.4" fill="#a8a8a8"/><rect x="1433" y="901.9" width="1" height="4.1" fill="#b0b0b0"/><rect x="1434" y="848.7" width="1" height="57.3" fill="#989898"/><rect x="1435" y="880.2" width="1" height="25.8" fill="#a0a0a0"/><rect x="1436" y="901.7" width="1" height="4.3" fill="#a0a0a0"/><rect x="1437" y="902.3" width="1" height="3.7" fill="#b0b0b0"/><rect x="1438" y="902.9" width="1" height="3.1" fill="#b0b0b0"/><rect x="1439" y="833.6" width="1" height="72.4" fill="#a8a8a8"/><rect x="1440" y="839.5" width="1" height="66.5" fill="#a8a8a8"/><rect x="1441" y="854.1" width="1" height="51.9" fill="#989898"/><rect x="1442" y="884.9" width="1" height="21.1" fill="#a0a0a0"/><rect x="1443" y="902.1" width="1" height="3.9" fill="#a0a0a0"/><rect x="1444" y="904.6" width="1" height="1.4" fill="#a0a0a0"/><rect x="1445" y="903.4" width="1" height="2.6" fill="#a8a8a8"/><rect x="1446" y="879.5" width="1" height="26.5" fill="#989898"/><rect x="1447" y="856.2" width="1" height="49.8" fill="#a0a0a0"/><rect x="1448" y="850.5" width="1" height="55.5" fill="#989898"/><rect x="1449" y="904.4" width="1" height="1.6" fill="#b0b0b0"/><rect x="1450" y="840.1" width="1" height="65.9" fill="#a8a8a8"/><rect x="1452" y="848.2" width="1" height="57.8" fill="#b0b0b0"/><rect x="1453" y="862.3" width="1" height="43.7" fill="#a0a0a0"/><rect x="1455" y="901.7" width="1" height="4.3" fill="#b0b0b0"/><rect x="1456" y="889.1" width="1" height="16.9" fill="#a8a8a8"/><rect x="1457" y="895.3" width="1" height="10.7" fill="#a8a8a8"/><rect x="1458" y="884.9" width="1" height="21.1" fill="#a0a0a0"/><rect x="1459" y="861.7" width="1" height="44.3" fill="#a0a0a0"/><rect x="1460" y="833.0" width="1" height="73.0" fill="#a0a0a0"/><rect x="1462" y="904.9" width="1" height="1.1" fill="#a8a8a8"/><rect x="1463" y="827.4" width="1" height="78.6" fill="#a0a0a0"/><rect x="1464" y="836.5" width="1" height="69.5" fill="#a8a8a8"/><rect x="1465" y="824.3" width="1" height="81.7" fill="#a0a0a0"/><rect x="1466" y="903.0" width="1" height="3.0" fill="#a0a0a0"/><rect x="1467" y="877.0" width="1" height="29.0" fill="#b0b0b0"/><rect x="1468" y="895.7" width="1" height="10.3" fill="#a8a8a8"/><rect x="1469" y="869.6" width="1" height="36.4" fill="#a0a0a0"/><rect x="1470" y="889.5" width="1" height="16.5" fill="#989898"/><rect x="1471" y="831.8" width="1" height="74.2" fill="#b0b0b0"/><rect x="1472" y="856.4" width="1" height="49.6" fill="#b0b0b0"/><rect x="1473" y="902.7" width="1" height="3.3" fill="#a0a0a0"/><rect x="1474" y="833.8" width="1" height="72.2" fill="#a0a0a0"/><rect x="1475" y="833.2" width="1" height="72.8" fill="#a8a8a8"/><rect x="1476" y="903.6" width="1" height="2.4" fill="#a0a0a0"/><rect x="1477" y="864.5" width="1" height="41.5" fill="#989898"/><rect x="1478" y="860.9" width="1" height="45.1" fill="#a0a0a0"/><rect x="1479" y="823.8" width="1" height="82.2" fill="#b0b0b0"/><rect x="1480" y="811.5" width="1" height="94.5" fill="#b0b0b0"/><rect x="1481" y="826.7" width="1" height="79.3" fill="#989898"/><rect x="1482" y="835.8" width="1" height="70.2" fill="#a0a0a0"/><rect x="1483" y="896.3" width="1" height="9.7" fill="#b0b0b0"/><rect x="1484" y="796.1" width="1" height="109.9" fill="#a0a0a0"/><rect x="1485" y="834.0" width="1" height="72.0" fill="#a0a0a0"/><rect x="1486" y="864.0" width="1" height="42.0" fill="#a8a8a8"/><rect x="1487" y="855.8" width="1" height="50.2" fill="#a8a8a8"/><rect x="1488" y="818.1" width="1" height="87.9" fill="#b0b0b0"/><rect x="1489" y="825.3" width="1" height="80.7" fill="#989898"/><rect x="1490" y="895.4" width="1" height="10.6" fill="#b0b0b0"/><rect x="1491" y="864.5" width="1" height="41.5" fill="#a0a0a0"/><rect x="1492" y="876.6" width="1" height="29.4" fill="#989898"/><rect x="1493" y="903.1" width="1" height="2.9" fill="#b0b0b0"/><rect x="1494" y="901.9" width="1" height="4.1" fill="#b0b0b0"/><rect x="1495" y="904.2" width="1" height="1.8" fill="#a0a0a0"/><rect x="1496" y="855.9" width="1" height="50.1" fill="#a8a8a8"/><rect x="1497" y="904.3" width="1" height="1.7" fill="#a0a0a0"/><rect x="1498" y="901.7" width="1" height="4.3" fill="#989898"/><rect x="1499" y="902.3" width="1" height="3.7" fill="#a0a0a0"/><rect x="1500" y="902.1" width="1" height="3.9" fill="#b0b0b0"/><rect x="1501" y="832.5" width="1" height="73.5" fill="#b0b0b0"/><rect x="1502" y="896.7" width="1" height="9.3" fill="#989898"/><rect x="1503" y="820.0" width="1" height="86.0" fill="#b0b0b0"/><rect x="1504" y="880.7" width="1" height="25.3" fill="#b0b0b0"/><rect x="1505" y="900.5" width="1" height="5.5" fill="#a0a0a0"/><rect x="1506" y="880.4" width="1" height="25.6" fill="#b0b0b0"/><rect x="1507" y="893.0" width="1" height="13.0" fill="#a8a8a8"/><rect x="1508" y="879.3" width="1" height="26.7" fill="#a0a0a0"/><rect x="1509" y="871.4" width="1" height="34.6" fill="#989898"/><rect x="1510" y="900.7" width="1" height="5.3" fill="#989898"/><rect x="1511" y="900.8" width="1" height="5.2" fill="#989898"/><rect x="1512" y="903.4" width="1" height="2.6" fill="#a0a0a0"/><rect x="1513" y="893.5" width="1" height="12.5" fill="#a0a0a0"/><rect x="1515" y="809.7" width="1" height="96.3" fill="#989898"/><rect x="1516" y="904.5" width="1" height="1.5" fill="#a0a0a0"/><rect x="1517" y="900.6" width="1" height="5.4" fill="#a0a0a0"/><rect x="1518" y="834.5" width="1" height="71.5" fill="#a8a8a8"/><rect x="1519" y="848.4" width="1" height="57.6" fill="#b0b0b0"/><rect x="1520" y="821.4" width="1" height="84.6" fill="#a8a8a8"/><rect x="1521" y="823.8" width="1" height="82.2" fill="#989898"/><rect x="1522" y="878.3" width="1" height="27.7" fill="#989898"/><rect x="1523" y="848.1" width="1" height="57.9" fill="#a0a0a0"/><rect x="1524" y="904.7" width="1" height="1.3" fill="#b0b0b0"/><rect x="1525" y="876.8" width="1" height="29.2" fill="#a8a8a8"/><rect x="1526" y="902.6" width="1" height="3.4" fill="#b0b0b0"/><rect x="1527" y="875.2" width="1" height="30.8" fill="#a8a8a8"/><rect x="1528" y="842.5" width="1" height="63.5" fill="#989898"/><rect x="1529" y="793.8" width="1" height="112.2" fill="#a8a8a8"/><rect x="1530" y="874.0" width="1" height="32.0" fill="#b0b0b0"/><rect x="1531" y="870.1" width="1" height="35.9" fill="#a8a8a8"/><rect x="1532" y="818.5" width="1" height="87.5" fill="#a8a8a8"/><rect x="1533" y="904.5" width="1" height="1.5" fill="#a8a8a8"/><rect x="1534" y="878.7" width="1" height="27.3" fill="#989898"/><rect x="1535" y="903.6" width="1" height="2.4" fill="#989898"/><rect x="1536" y="793.8" width="1" height="112.2" fill="#a8a8a8"/><rect x="1537" y="809.5" width="1" height="96.5" fill="#a0a0a0"/><rect x="1538" y="805.2" width="1" height="100.8" fill="#989898"/><rect x="1539" y="868.4" width="1" height="37.6" fill="#a8a8a8"/><rect x="1540" y="832.2" width="1" height="73.8" fill="#a8a8a8"/><rect x="1541" y="837.3" width="1" height="68.7" fill="#a8a8a8"/><rect x="1542" y="820.8" width="1" height="85.2" fill="#b0b0b0"/><rect x="1543" y="842.7" width="1" height="63.3" fill="#a8a8a8"/><rect x="1544" y="815.3" width="1" height="90.7" fill="#b0b0b0"/><rect x="1545" y="829.1" width="1" height="76.9" fill="#a8a8a8"/><rect x="1546" y="844.6" width="1" height="61.4" fill="#a0a0a0"/><rect x="1547" y="899.1" width="1" height="6.9" fill="#a8a8a8"/><rect x="1548" y="871.2" width="1" height="34.8" fill="#989898"/><rect x="1549" y="854.5" width="1" height="51.5" fill="#989898"/><rect x="1550" y="874.5" width="1" height="31.5" fill="#a0a0a0"/><rect x="1551" y="881.9" width="1" height="24.1" fill="#a8a8a8"/><rect x="1552" y="902.3" width="1" height="3.7" fill="#b0b0b0"/><rect x="1553" y="871.9" width="1" height="34.1" fill="#989898"/><rect x="1554" y="828.9" width="1" height="77.1" fill="#989898"/><rect x="1555" y="868.9" width="1" height="37.1" fill="#989898"/><rect x="1556" y="880.9" width="1" height="25.1" fill="#989898"/><rect x="1557" y="831.1" width="1" height="74.9" fill="#989898"/><rect x="1558" y="826.9" width="1" height="79.1" fill="#a8a8a8"/><rect x="1559" y="840.6" width="1" height="65.4" fill="#b0b0b0"/><rect x="1561" y="826.6" width="1" height="79.4" fill="#989898"/><rect x="1562" y="793.8" width="1" height="112.2" fill="#b0b0b0"/><rect x="1563" y="899.3" width="1" height="6.7" fill="#a0a0a0"/><rect x="1564" y="900.4" width="1" height="5.6" fill="#b0b0b0"/><rect x="1565" y="853.8" width="1" height="52.2" fill="#989898"/><rect x="1566" y="903.9" width="1" height="2.1" fill="#b0b0b0"/><rect x="1567" y="881.8" width="1" height="24.2" fill="#989898"/><rect x="1568" y="904.7" width="1" height="1.3" fill="#b0b0b0"/><rect x="1570" y="880.1" width="1" height="25.9" fill="#a0a0a0"/><rect x="1571" y="900.7" width="1" height="5.3" fill="#a8a8a8"/><rect x="1572" y="853.9" width="1" height="52.1" fill="#a8a8a8"/><rect x="1573" y="866.4" width="1" height="39.6" fill="#b0b0b0"/><rect x="1574" y="864.5" width="1" height="41.5" fill="#989898"/><rect x="1575" y="877.8" width="1" height="28.2" fill="#989898"/><rect x="1576" y="849.0" width="1" height="57.0" fill="#a8a8a8"/><rect x="1577" y="902.3" width="1" height="3.7" fill="#989898"/><rect x="1578" y="904.0" width="1" height="2.0" fill="#989898"/><rect x="1579" y="869.1" width="1" height="36.9" fill="#989898"/><rect x="1580" y="884.5" width="1" height="21.5" fill="#a0a0a0"/><rect x="1581" y="901.6" width="1" height="4.4" fill="#b0b0b0"/><rect x="1582" y="860.5" width="1" height="45.5" fill="#b0b0b0"/><rect x="1583" y="865.2" width="1" height="40.8" fill="#b0b0b0"/><rect x="1584" y="867.8" width="1" height="38.2" fill="#989898"/><rect x="1585" y="868.9" width="1" height="37.1" fill="#a0a0a0"/><rect x="1586" y="895.3" width="1" height="10.7" fill="#989898"/><rect x="1587" y="904.2" width="1" height="1.8" fill="#b0b0b0"/><rect x="1588" y="904.9" width="1" height="1.1" fill="#b0b0b0"/><rect x="1589" y="811.3" width="1" height="94.7" fill="#a0a0a0"/><rect x="1590" y="884.1" width="1" height="21.9" fill="#a8a8a8"/><rect x="1591" y="845.3" width="1" height="60.7" fill="#a0a0a0"/><rect x="1592" y="844.8" width="1" height="61.2" fill="#a0a0a0"/><rect x="1593" y="900.5" width="1" height="5.5" fill="#a8a8a8"/><rect x="1594" y="869.5" width="1" height="36.5" fill="#a8a8a8"/><rect x="1595" y="889.5" width="1" height="16.5" fill="#989898"/><rect x="1596" y="852.7" width="1" height="53.3" fill="#989898"/><rect x="1597" y="833.4" width="1" height="72.6" fill="#a8a8a8"/><rect x="1599" y="805.6" width="1" height="100.4" fill="#989898"/><rect x="1600" y="858.4" width="1" height="47.6" fill="#989898"/><rect x="1601" y="877.5" width="1" height="28.5" fill="#a8a8a8"/><rect x="1602" y="892.8" width="1" height="13.2" fill="#a0a0a0"/><rect x="1603" y="901.4" width="1" height="4.6" fill="#a8a8a8"/><rect x="1604" y="891.1" width="1" height="14.9" fill="#a8a8a8"/><rect x="1605" y="896.8" width="1" height="9.2" fill="#a0a0a0"/><rect x="1606" y="841.8" width="1" height="64.2" fill="#a8a8a8"/><rect x="1607" y="850.9" width="1" height="55.1" fill="#a0a0a0"/><rect x="1608" y="843.6" width="1" height="62.4" fill="#b0b0b0"/><rect x="1609" y="901.2" width="1" height="4.8" fill="#989898"/><rect x="1610" y="901.8" width="1" height="4.2" fill="#b0b0b0"/><rect x="1611" y="848.4" width="1" height="57.6" fill="#b0b0b0"/><rect x="1612" y="901.4" width="1" height="4.6" fill="#b0b0b0"/><rect x="1613" y="867.7" width="1" height="38.3" fill="#a0a0a0"/><rect x="1614" y="797.0" width="1" height="109.0" fill="#b0b0b0"/><rect x="1615" y="839.3" width="1" height="66.7" fill="#a0a0a0"/><rect x="1616" y="892.8" width="1" height="13.2" fill="#a0a0a0"/><rect x="1617" y="897.9" width="1" height="8.1" fill="#b0b0b0"/><rect x="1618" y="867.8" width="1" height="38.2" fill="#a8a8a8"/><rect x="1619" y="900.9" width="1" height="5.1" fill="#989898"/><rect x="1620" y="817.9" width="1" height="88.1" fill="#a8a8a8"/><rect x="1621" y="891.8" width="1" height="14.2" fill="#a0a0a0"/><rect x="1622" y="868.0" width="1" height="38.0" fill="#989898"/><rect x="1623" y="810.0" width="1" height="96.0" fill="#a8a8a8"/><rect x="1624" y="829.6" width="1" height="76.4" fill="#a0a0a0"/><rect x="1625" y="895.6" width="1" height="10.4" fill="#a0a0a0"/><rect x="1626" y="903.4" width="1" height="2.6" fill="#a0a0a0"/><rect x="1627" y="893.6" width="1" height="12.4" fill="#a8a8a8"/><rect x="1628" y="904.0" width="1" height="2.0" fill="#b0b0b0"/><rect x="1629" y="904.9" width="1" height="1.1" fill="#a8a8a8"/><rect x="1630" y="902.7" width="1" height="3.3" fill="#b0b0b0"/><rect x="1631" y="818.6" width="1" height="87.4" fill="#a0a0a0"/><rect x="1632" y="866.2" width="1" height="39.8" fill="#a8a8a8"/><rect x="1633" y="889.4" width="1" height="16.6" fill="#989898"/><rect x="1634" y="902.4" width="1" height="3.6" fill="#989898"/><rect x="1635" y="891.3" width="1" height="14.7" fill="#989898"/><rect x="1636" y="834.9" width="1" height="71.1" fill="#989898"/><rect x="1637" y="832.6" width="1" height="73.4" fill="#a0a0a0"/><rect x="1638" y="901.7" width="1" height="4.3" fill="#989898"/><rect x="1639" y="840.9" width="1" height="65.1" fill="#b0b0b0"/><rect x="1641" y="853.6" width="1" height="52.4" fill="#a8a8a8"/><rect x="1642" y="903.0" width="1" height="3.0" fill="#b0b0b0"/><rect x="1643" y="901.0" width="1" height="5.0" fill="#b0b0b0"/><rect x="1644" y="877.7" width="1" height="28.3" fill="#a0a0a0"/><rect x="1645" y="862.8" width="1" height="43.2" fill="#a0a0a0"/><rect x="1646" y="844.0" width="1" height="62.0" fill="#a8a8a8"/><rect x="1647" y="793.8" width="1" height="112.2" fill="#989898"/><rect x="1648" y="809.9" width="1" height="96.1" fill="#989898"/><rect x="1649" y="900.5" width="1" height="5.5" fill="#a0a0a0"/><rect x="1650" y="902.5" width="1" height="3.5" fill="#a8a8a8"/><rect x="1651" y="844.3" width="1" height="61.7" fill="#989898"/><rect x="1652" y="904.4" width="1" height="1.6" fill="#b0b0b0"/><rect x="1653" y="842.6" width="1" height="63.4" fill="#a8a8a8"/><rect x="1654" y="818.5" width="1" height="87.5" fill="#989898"/><rect x="1655" y="861.9" width="1" height="44.1" fill="#a8a8a8"/><rect x="1656" y="855.4" width="1" height="50.6" fill="#b0b0b0"/><rect x="1657" y="841.3" width="1" height="64.7" fill="#b0b0b0"/><rect x="1658" y="833.5" width="1" height="72.5" fill="#a8a8a8"/><rect x="1659" y="899.6" width="1" height="6.4" fill="#a8a8a8"/><rect x="1660" y="858.8" width="1" height="47.2" fill="#b0b0b0"/><rect x="1661" y="877.4" width="1" height="28.6" fill="#a8a8a8"/><rect x="1662" y="885.1" width="1" height="20.9" fill="#a8a8a8"/><rect x="1663" y="903.6" width="1" height="2.4" fill="#b0b0b0"/><rect x="1664" y="868.3" width="1" height="37.7" fill="#a8a8a8"/><rect x="1665" y="826.1" width="1" height="79.9" fill="#a8a8a8"/><rect x="1666" y="849.7" width="1" height="56.3" fill="#a0a0a0"/><rect x="1667" y="846.3" width="1" height="59.7" fill="#a0a0a0"/><rect x="1668" y="875.4" width="1" height="30.6" fill="#a8a8a8"/><rect x="1669" y="864.3" width="1" height="41.7" fill="#989898"/><rect x="1671" y="815.1" width="1" height="90.9" fill="#a0a0a0"/><rect x="1672" y="901.1" width="1" height="4.9" fill="#a8a8a8"/><rect x="1673" y="837.7" width="1" height="68.3" fill="#b0b0b0"/><rect x="1674" y="901.2" width="1" height="4.8" fill="#989898"/><rect x="1675" y="820.8" width="1" height="85.2" fill="#a8a8a8"/><rect x="1676" y="882.2" width="1" height="23.8" fill="#a0a0a0"/><rect x="1677" y="886.2" width="1" height="19.8" fill="#b0b0b0"/><rect x="1678" y="873.6" width="1" height="32.4" fill="#989898"/><rect x="1679" y="901.0" width="1" height="5.0" fill="#b0b0b0"/><rect x="1680" y="900.7" width="1" height="5.3" fill="#b0b0b0"/><rect x="1681" y="903.0" width="1" height="3.0" fill="#989898"/><rect x="1682" y="855.1" width="1" height="50.9" fill="#a0a0a0"/><rect x="1683" y="873.5" width="1" height="32.5" fill="#989898"/><rect x="1684" y="904.2" width="1" height="1.8" fill="#a8a8a8"/><rect x="1685" y="866.2" width="1" height="39.8" fill="#b0b0b0"/><rect x="1686" y="904.3" width="1" height="1.7" fill="#b0b0b0"/><rect x="1687" y="837.5" width="1" height="68.5" fill="#a8a8a8"/><rect x="1688" y="859.5" width="1" height="46.5" fill="#a0a0a0"/><rect x="1689" y="901.7" width="1" height="4.3" fill="#989898"/><rect x="1690" y="883.8" width="1" height="22.2" fill="#a0a0a0"/><rect x="1691" y="869.8" width="1" height="36.2" fill="#989898"/><rect x="1692" y="887.9" width="1" height="18.1" fill="#b0b0b0"/><rect x="1693" y="902.8" width="1" height="3.2" fill="#a0a0a0"/><rect x="1694" y="844.1" width="1" height="61.9" fill="#989898"/><rect x="1695" y="815.7" width="1" height="90.3" fill="#a0a0a0"/><rect x="1696" y="840.8" width="1" height="65.2" fill="#a0a0a0"/><rect x="1697" y="901.4" width="1" height="4.6" fill="#a8a8a8"/><rect x="1698" y="842.9" width="1" height="63.1" fill="#b0b0b0"/><rect x="1699" y="899.7" width="1" height="6.3" fill="#a8a8a8"/><rect x="1700" y="831.6" width="1" height="74.4" fill="#a8a8a8"/><rect x="1701" y="845.1" width="1" height="60.9" fill="#b0b0b0"/><rect x="1702" y="842.8" width="1" height="63.2" fill="#a8a8a8"/><rect x="1703" y="845.8" width="1" height="60.2" fill="#a8a8a8"/><rect x="1704" y="861.1" width="1" height="44.9" fill="#a8a8a8"/><rect x="1705" y="851.5" width="1" height="54.5" fill="#989898"/><rect x="1706" y="809.2" width="1" height="96.8" fill="#a0a0a0"/><rect x="1707" y="882.9" width="1" height="23.1" fill="#989898"/><rect x="1708" y="901.8" width="1" height="4.2" fill="#a8a8a8"/><rect x="1709" y="832.7" width="1" height="73.3" fill="#a8a8a8"/><rect x="1710" y="836.0" width="1" height="70.0" fill="#a8a8a8"/><rect x="1711" y="839.2" width="1" height="66.8" fill="#a0a0a0"/><rect x="1712" y="902.0" width="1" height="4.0" fill="#a0a0a0"/><rect x="1713" y="831.7" width="1" height="74.3" fill="#a8a8a8"/><rect x="1714" y="862.8" width="1" height="43.2" fill="#b0b0b0"/><rect x="1715" y="841.3" width="1" height="64.7" fill="#989898"/><rect x="1716" y="851.7" width="1" height="54.3" fill="#a0a0a0"/><rect x="1717" y="852.9" width="1" height="53.1" fill="#989898"/><rect x="1718" y="902.9" width="1" height="3.1" fill="#989898"/><rect x="1719" y="856.4" width="1" height="49.6" fill="#a8a8a8"/><rect x="1720" y="903.3" width="1" height="2.7" fill="#a0a0a0"/><rect x="1721" y="904.3" width="1" height="1.7" fill="#a0a0a0"/><rect x="1722" y="899.5" width="1" height="6.5" fill="#a0a0a0"/><rect x="1723" y="828.4" width="1" height="77.6" fill="#b0b0b0"/><rect x="1724" y="872.1" width="1" height="33.9" fill="#989898"/><rect x="1725" y="887.9" width="1" height="18.1" fill="#b0b0b0"/><rect x="1726" y="853.8" width="1" height="52.2" fill="#989898"/><rect x="1727" y="835.8" width="1" height="70.2" fill="#a8a8a8"/><rect x="1728" y="821.3" width="1" height="84.7" fill="#a8a8a8"/><rect x="1729" y="904.0" width="1" height="2.0" fill="#b0b0b0"/><rect x="1730" y="843.8" width="1" height="62.2" fill="#b0b0b0"/><rect x="1731" y="855.6" width="1" height="50.4" fill="#989898"/><rect x="1732" y="887.0" width="1" height="19.0" fill="#b0b0b0"/><rect x="1733" y="904.4" width="1" height="1.6" fill="#b0b0b0"/><rect x="1734" y="816.6" width="1" height="89.4" fill="#a8a8a8"/><rect x="1735" y="844.0" width="1" height="62.0" fill="#a8a8a8"/><rect x="1736" y="839.6" width="1" height="66.4" fill="#a0a0a0"/><rect x="1737" y="902.2" width="1" height="3.8" fill="#b0b0b0"/><rect x="1738" y="901.1" width="1" height="4.9" fill="#a0a0a0"/><rect x="1739" y="897.9" width="1" height="8.1" fill="#989898"/><rect x="1740" y="835.0" width="1" height="71.0" fill="#a8a8a8"/><rect x="1741" y="889.8" width="1" height="16.2" fill="#b0b0b0"/><rect x="1742" y="900.7" width="1" height="5.3" fill="#b0b0b0"/><rect x="1743" y="831.5" width="1" height="74.5" fill="#a8a8a8"/><rect x="1744" y="898.3" width="1" height="7.7" fill="#989898"/><rect x="1745" y="888.3" width="1" height="17.7" fill="#a8a8a8"/><rect x="1746" y="854.1" width="1" height="51.9" fill="#b0b0b0"/><rect x="1747" y="837.4" width="1" height="68.6" fill="#a0a0a0"/><rect x="1748" y="856.8" width="1" height="49.2" fill="#b0b0b0"/><rect x="1749" y="901.9" width="1" height="4.1" fill="#989898"/><rect x="1750" y="875.6" width="1" height="30.4" fill="#b0b0b0"/><rect x="1752" y="893.9" width="1" height="12.1" fill="#a0a0a0"/><rect x="1753" y="901.7" width="1" height="4.3" fill="#a0a0a0"/><rect x="1754" y="902.8" width="1" height="3.2" fill="#a0a0a0"/><rect x="1755" y="830.9" width="1" height="75.1" fill="#b0b0b0"/><rect x="1756" y="900.9" width="1" height="5.1" fill="#989898"/><rect x="1757" y="811.9" width="1" height="94.1" fill="#b0b0b0"/><rect x="1758" y="840.0" width="1" height="66.0" fill="#989898"/><rect x="1759" y="852.4" width="1" height="53.6" fill="#a8a8a8"/><rect x="1760" y="888.9" width="1" height="17.1" fill="#b0b0b0"/><rect x="1761" y="896.4" width="1" height="9.6" fill="#a0a0a0"/><rect x="1762" y="904.1" width="1" height="1.9" fill="#b0b0b0"/><rect x="1763" y="904.0" width="1" height="2.0" fill="#a8a8a8"/><rect x="1764" y="810.2" width="1" height="95.8" fill="#a0a0a0"/><rect x="1765" y="901.7" width="1" height="4.3" fill="#a0a0a0"/><rect x="1766" y="890.4" width="1" height="15.6" fill="#a8a8a8"/></g>
<line x1="1230.64" y1="906" x2="1230.64" y2="760.2" stroke="#f4f4f4" stroke-width="1.6"/><line x1="1248.61" y1="906" x2="1248.61" y2="777.1" stroke="#f4f4f4" stroke-width="1.6"/><line x1="1374.75" y1="906" x2="1374.75" y2="752.8" stroke="#f4f4f4" stroke-width="1.6"/><line x1="1392.71" y1="906" x2="1392.71" y2="780.9" stroke="#f4f4f4" stroke-width="1.6"/><line x1="1517.73" y1="906" x2="1517.73" y2="719.0" stroke="#f4f4f4" stroke-width="1.6"/><line x1="1589.97" y1="906" x2="1589.97" y2="753.7" stroke="#f4f4f4" stroke-width="1.6"/><line x1="1679.80" y1="906" x2="1679.80" y2="771.5" stroke="#f4f4f4" stroke-width="1.6"/><line x1="1451.85" y1="906" x2="1451.85" y2="771.5" stroke="#f4f4f4" stroke-width="1.6"/><line x1="1259.09" y1="906" x2="1259.09" y2="788.4" stroke="#b4b4b4" stroke-width="1.2"/><line x1="1270.69" y1="906" x2="1270.69" y2="797.8" stroke="#b4b4b4" stroke-width="1.2"/><line x1="1308.12" y1="906" x2="1308.12" y2="794.0" stroke="#b4b4b4" stroke-width="1.2"/><line x1="1356.78" y1="906" x2="1356.78" y2="803.4" stroke="#b4b4b4" stroke-width="1.2"/><line x1="1540.19" y1="906" x2="1540.19" y2="794.0" stroke="#b4b4b4" stroke-width="1.2"/><line x1="1551.42" y1="906" x2="1551.42" y2="790.2" stroke="#b4b4b4" stroke-width="1.2"/><line x1="1465.33" y1="906" x2="1465.33" y2="797.8" stroke="#b4b4b4" stroke-width="1.2"/><line x1="1495.27" y1="906" x2="1495.27" y2="803.4" stroke="#b4b4b4" stroke-width="1.2"/><line x1="1641.25" y1="906" x2="1641.25" y2="809.0" stroke="#b4b4b4" stroke-width="1.2"/><line x1="1682.42" y1="906" x2="1682.42" y2="794.0" stroke="#b4b4b4" stroke-width="1.2"/><line x1="1716.11" y1="906" x2="1716.11" y2="812.8" stroke="#b4b4b4" stroke-width="1.2"/><line x1="1515.48" y1="906" x2="1515.48" y2="776.2" stroke="#b4b4b4" stroke-width="1.2"/>
<g shape-rendering="crispEdges"><rect x="1097" y="904" width="96" height="2" fill="#a8a8a8"/><rect x="1768" y="904" width="94" height="2" fill="#a8a8a8"/></g>
<line x1="1193.5" y1="721" x2="1193.5" y2="907" stroke="#eaea20" stroke-width="2" stroke-dasharray="2,2"/><line x1="1336.5" y1="721" x2="1336.5" y2="907" stroke="#eaea20" stroke-width="2" stroke-dasharray="2,2"/><line x1="1480.5" y1="721" x2="1480.5" y2="907" stroke="#eaea20" stroke-width="2" stroke-dasharray="2,2"/><line x1="1624.5" y1="721" x2="1624.5" y2="907" stroke="#eaea20" stroke-width="2" stroke-dasharray="2,2"/><line x1="1767.5" y1="721" x2="1767.5" y2="907" stroke="#eaea20" stroke-width="2" stroke-dasharray="2,2"/>
<g shape-rendering="crispEdges"><rect x="1096" y="718" width="768" height="2" fill="#a0a0a0"/><rect x="1096" y="906" width="768" height="2" fill="#a0a0a0"/><rect x="1096" y="718" width="1" height="190" fill="#a0a0a0"/><rect x="1862" y="718" width="2" height="190" fill="#a0a0a0"/></g>
</svg>
<div class="t " style="right:790.2px;top:710.4px;font-size:16.5px;line-height:16.5px;color:#f4f4f4;">1.0</div>
<div class="t " style="right:790.2px;top:749.4px;font-size:16.5px;line-height:16.5px;color:#f4f4f4;">0.8</div>
<div class="t " style="right:790.2px;top:787.4px;font-size:16.5px;line-height:16.5px;color:#f4f4f4;">0.6</div>
<div class="t " style="right:790.2px;top:825.4px;font-size:16.5px;line-height:16.5px;color:#f4f4f4;">0.4</div>
<div class="t " style="right:790.2px;top:862.4px;font-size:16.5px;line-height:16.5px;color:#f4f4f4;">0.2</div>
<div class="t " style="right:790.2px;top:898.4px;font-size:16.5px;line-height:16.5px;color:#f4f4f4;">0.0</div>
<div class="t " style="left:643.5px;width:1000px;text-align:center;top:912.9px;font-size:16.5px;line-height:16.5px;color:#f4f4f4;">-900</div>
<div class="t " style="left:718.5px;width:1000px;text-align:center;top:912.9px;font-size:16.5px;line-height:16.5px;color:#f4f4f4;">-700</div>
<div class="t " style="left:793.5px;width:1000px;text-align:center;top:912.9px;font-size:16.5px;line-height:16.5px;color:#f4f4f4;">-500</div>
<div class="t " style="left:868.5px;width:1000px;text-align:center;top:912.9px;font-size:16.5px;line-height:16.5px;color:#f4f4f4;">-300</div>
<div class="t " style="left:942.5px;width:1000px;text-align:center;top:912.9px;font-size:16.5px;line-height:16.5px;color:#f4f4f4;">-100</div>
<div class="t " style="left:1017.5px;width:1000px;text-align:center;top:912.9px;font-size:16.5px;line-height:16.5px;color:#f4f4f4;">100</div>
<div class="t " style="left:1092.5px;width:1000px;text-align:center;top:912.9px;font-size:16.5px;line-height:16.5px;color:#f4f4f4;">300</div>
<div class="t " style="left:1167.5px;width:1000px;text-align:center;top:912.9px;font-size:16.5px;line-height:16.5px;color:#f4f4f4;">500</div>
<div class="t " style="left:1242.5px;width:1000px;text-align:center;top:912.9px;font-size:16.5px;line-height:16.5px;color:#f4f4f4;">700</div>
<div class="t " style="left:1316.5px;width:1000px;text-align:center;top:912.9px;font-size:16.5px;line-height:16.5px;color:#f4f4f4;">900</div>
<div class="t " style="left:980.0px;width:1000px;text-align:center;top:937.1px;font-size:16.8px;line-height:16.8px;color:#f4f4f4;">TII Subcarrier</div>
<div class="t" style="left:926.8px;top:804.6px;width:200px;text-align:center;font-size:15.3px;font-weight:bold;line-height:18px;color:#f4f4f4;transform:rotate(-90deg)">Magnitude</div>
<div class="a" style="left:0px;top:63px;width:1.2px;height:901px;background:repeating-linear-gradient(180deg,rgba(0,10,30,0.85) 0 2px,transparent 2px 4px);"></div></body></html>
